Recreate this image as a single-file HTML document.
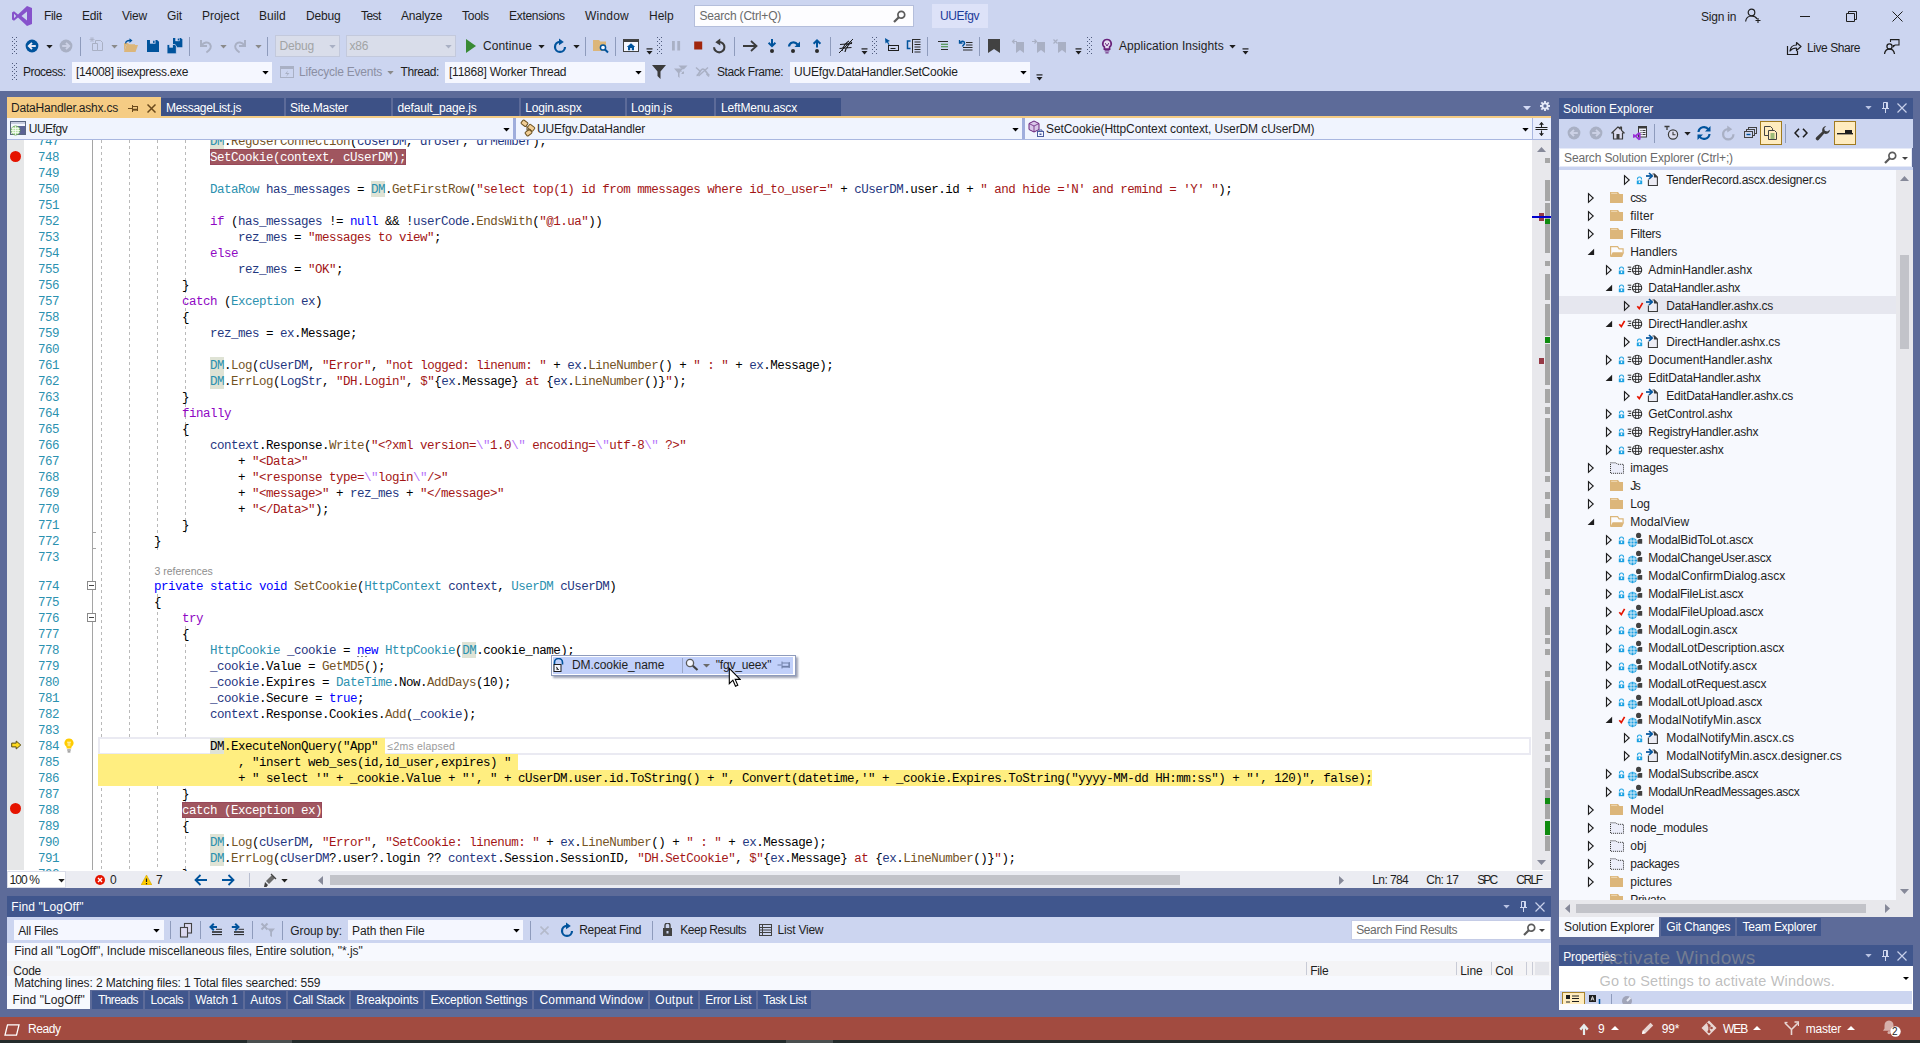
<!DOCTYPE html><html><head><meta charset="utf-8"><title>UUEfgv (Debugging) - Microsoft Visual Studio</title><style>
*{box-sizing:border-box;margin:0;padding:0}
html,body{width:1920px;height:1043px;overflow:hidden;background:#5D6B99;font-family:"Liberation Sans",sans-serif;font-size:12px;color:#000}
body{position:relative}
div,svg{position:absolute}
.t{white-space:pre;}
.code{font-family:"Liberation Mono",monospace;font-size:12.5px;letter-spacing:-0.5px;white-space:pre;height:16px;line-height:16px;color:#000}
.ln{font-family:"Liberation Mono",monospace;font-size:12.5px;letter-spacing:-0.5px;white-space:pre;height:16px;line-height:16px;color:#2B91AF}
.code span{position:static}
.k{color:#0000FF}.c{color:#8F08C4}.ty{color:#2B91AF}.s{color:#A31515}.m{color:#74531F}.v{color:#1F377F}.e{color:#B776FB}
.g{color:#2B91AF}
.bp{color:#fff}
.tab{height:19px;top:97px;background:#40568D;color:#fff;white-space:pre;line-height:19px;padding-left:5px}
.btab{height:19px;top:991px;background:#40568D;color:#fff;white-space:pre;line-height:18px;text-align:center}
.cb{background:#F5F7FF;border:1px solid #F5F7FF}
</style></head><body>
<div style="left:0px;top:0px;width:1920px;height:91px;background:#CCD5F0;"></div>
<svg style="left:11px;top:5px;" width="22" height="22" viewBox="0 0 22 22"><path d="M16 1l5 2v16l-5 2-9-8.500-4 3.200L1 14.500V7.500L3 6.300l4 3.200zM16 6.500L10.500 11l5.500 4.500zM3 8.800v4.400L5.200 11z" fill="#8652CB" fill-rule="evenodd"/></svg>
<div class="t" style="left:44px;top:8.0px;height:16px;line-height:16px;color:#1E1E1E;font-size:12px;letter-spacing:-0.336px;">File</div>
<div class="t" style="left:82px;top:8.0px;height:16px;line-height:16px;color:#1E1E1E;font-size:12px;letter-spacing:-0.172px;">Edit</div>
<div class="t" style="left:122px;top:8.0px;height:16px;line-height:16px;color:#1E1E1E;font-size:12px;letter-spacing:-0.199px;">View</div>
<div class="t" style="left:167px;top:8.0px;height:16px;line-height:16px;color:#1E1E1E;font-size:12px;letter-spacing:-0.115px;">Git</div>
<div class="t" style="left:202px;top:8.0px;height:16px;line-height:16px;color:#1E1E1E;font-size:12px;letter-spacing:-0.023px;">Project</div>
<div class="t" style="left:259px;top:8.0px;height:16px;line-height:16px;color:#1E1E1E;font-size:12px;letter-spacing:0.002px;">Build</div>
<div class="t" style="left:306px;top:8.0px;height:16px;line-height:16px;color:#1E1E1E;font-size:12px;letter-spacing:-0.175px;">Debug</div>
<div class="t" style="left:361px;top:8.0px;height:16px;line-height:16px;color:#1E1E1E;font-size:12px;letter-spacing:-0.554px;">Test</div>
<div class="t" style="left:401px;top:8.0px;height:16px;line-height:16px;color:#1E1E1E;font-size:12px;letter-spacing:-0.215px;">Analyze</div>
<div class="t" style="left:462px;top:8.0px;height:16px;line-height:16px;color:#1E1E1E;font-size:12px;letter-spacing:-0.243px;">Tools</div>
<div class="t" style="left:509px;top:8.0px;height:16px;line-height:16px;color:#1E1E1E;font-size:12px;letter-spacing:-0.300px;">Extensions</div>
<div class="t" style="left:585px;top:8.0px;height:16px;line-height:16px;color:#1E1E1E;font-size:12px;letter-spacing:0.219px;">Window</div>
<div class="t" style="left:649px;top:8.0px;height:16px;line-height:16px;color:#1E1E1E;font-size:12px;letter-spacing:0.003px;">Help</div>
<div style="left:694px;top:5px;width:220px;height:22px;background:#FDFDFF;border:1px solid #B4BEDB;"></div>
<div class="t" style="left:699.5px;top:8.0px;height:16px;line-height:16px;color:#6A6A6A;font-size:12px;letter-spacing:-0.184px;">Search (Ctrl+Q)</div>
<svg style="left:893px;top:10px;" width="13" height="13" viewBox="0 0 13 13"><circle cx="8.300" cy="4.700" r="3.400" fill="none" stroke="#5B5B5B" stroke-width="1.700"/><path d="M5.800 7.200L1 12" stroke="#5B5B5B" stroke-width="2.200"/></svg>
<div style="left:932px;top:4px;width:56px;height:24px;background:#DDE2F8;"></div>
<div class="t" style="left:940px;top:8.0px;height:16px;line-height:16px;color:#1B3A9A;font-size:12px;letter-spacing:-0.357px;">UUEfgv</div>
<div class="t" style="left:1701px;top:9.0px;height:16px;line-height:16px;color:#1E1E1E;font-size:12px;letter-spacing:-0.200px;">Sign in</div>
<svg style="left:1745px;top:8px;" width="16" height="16" viewBox="0 0 16 16"><circle cx="6.500" cy="4.500" r="3.300" fill="none" stroke="#1E1E1E" stroke-width="1.200"/><path d="M.600 13.500c.500-4 3-5.500 6-5.500s4.500 1.200 5.500 3" fill="none" stroke="#1E1E1E" stroke-width="1.200"/><path d="M13 10v5M10.500 12.500h5" stroke="#1E1E1E" stroke-width="1.100"/></svg>
<div style="left:1800px;top:16px;width:10px;height:1px;background:#1E1E1E"></div>
<svg style="left:1846px;top:11px;" width="11" height="11" viewBox="0 0 11 11"><path d="M.5 2.500h8v8h-8z" fill="none" stroke="#1E1E1E"/><path d="M2.500 2.500v-2h8v8h-2" fill="none" stroke="#1E1E1E"/></svg>
<svg style="left:1892px;top:11px;" width="11" height="11" viewBox="0 0 11 11"><path d="M.5 .5l10 10M10.5 .5l-10 10" stroke="#1E1E1E" stroke-width="1"/></svg>
<svg style="left:12px;top:37px;" width="5" height="18" viewBox="0 0 5 18"><rect x="0" y="0" width="1" height="1" fill="#4F5B7D"/><rect x="4" y="0" width="1" height="1" fill="#4F5B7D"/><rect x="2" y="2" width="1" height="1" fill="#4F5B7D"/><rect x="0" y="4" width="1" height="1" fill="#4F5B7D"/><rect x="4" y="4" width="1" height="1" fill="#4F5B7D"/><rect x="2" y="6" width="1" height="1" fill="#4F5B7D"/><rect x="0" y="8" width="1" height="1" fill="#4F5B7D"/><rect x="4" y="8" width="1" height="1" fill="#4F5B7D"/><rect x="2" y="10" width="1" height="1" fill="#4F5B7D"/><rect x="0" y="12" width="1" height="1" fill="#4F5B7D"/><rect x="4" y="12" width="1" height="1" fill="#4F5B7D"/><rect x="2" y="14" width="1" height="1" fill="#4F5B7D"/><rect x="0" y="16" width="1" height="1" fill="#4F5B7D"/><rect x="4" y="16" width="1" height="1" fill="#4F5B7D"/><rect x="2" y="18" width="1" height="1" fill="#4F5B7D"/></svg>
<svg style="left:25px;top:39px;" width="14" height="14" viewBox="0 0 14 14"><circle cx="7" cy="7" r="6.400" fill="#00539C"/><path d="M10.800 7H4.200" stroke="#F0EEF8" stroke-width="1.900"/><path d="M7 3.800L3.800 7 7 10.200" fill="none" stroke="#F0EEF8" stroke-width="1.900"/></svg>
<svg style="left:46px;top:45px;" width="7" height="4" viewBox="0 0 7 4"><path d="M.300 0h6.400L3.500 3.500z" fill="#1E1E1E"/></svg>
<svg style="left:59px;top:39px;" width="14" height="14" viewBox="0 0 14 14"><circle cx="7" cy="7" r="6.400" fill="#A9B0C4"/><g transform="translate(14,0) scale(-1,1)"><path d="M10.800 7H4.200" stroke="#CDD2E6" stroke-width="1.900"/><path d="M7 3.800L3.800 7 7 10.200" fill="none" stroke="#CDD2E6" stroke-width="1.900"/></g></svg>
<div style="left:80px;top:37px;width:1px;height:19px;background:#8E9BBC"></div>
<svg style="left:89px;top:37px;" width="16" height="16" viewBox="0 0 16 16"><path d="M6.5 3.5h5l2 2v8h-7z" fill="none" stroke="#A9B0C4"/><path d="M3.5 6.5h5v7h-5z" fill="#CCD5F0" stroke="#A9B0C4"/><path d="M3 0v5M.5 2.5h5M1.2 .8l3.6 3.6M4.8 .8L1.2 4.4" stroke="#A9B0C4" stroke-width=".8"/></svg>
<svg style="left:111px;top:45px;" width="7" height="4" viewBox="0 0 7 4"><path d="M.300 0h6.400L3.500 3.500z" fill="#8A8A8A"/></svg>
<svg style="left:123px;top:38px;" width="16" height="16" viewBox="0 0 16 16"><path d="M1 14l2.5-7H15l-2.5 7z" fill="#DCB67A"/><path d="M1 14V5h4l1 1.2h6V7H3.2z" fill="#DCB67A"/><path d="M2 5.5C2 3 4 1.8 6.5 1.8V.3L9.5 2.6 6.5 5V3.3C4.6 3.3 3.3 4 3.3 5.5z" fill="#00539C"/></svg>
<svg style="left:147px;top:40px;" width="12" height="12" viewBox="0 0 13 13"><path d="M0 0h11l2 2v11H0z" fill="#00539C"/><rect x="3.2" y="0" width="6" height="4" fill="#CCD5F0"/><rect x="6.6" y=".8" width="1.6" height="2.4" fill="#00539C"/></svg>
<svg style="left:167px;top:38px;" width="16" height="16" viewBox="0 0 16 16"><g transform="translate(6,0) scale(.72)"><path d="M0 0h11l2 2v11H0z" fill="#00539C"/><rect x="3.2" y="0" width="6" height="4.4" fill="#CCD5F0"/><rect x="6.6" y=".8" width="1.8" height="2.6" fill="#00539C"/></g><g transform="translate(0,6.5) scale(.72)"><path d="M0 0h11l2 2v11H0z" fill="#00539C" stroke="#CCD5F0" stroke-width="1.2"/><rect x="3.2" y="0" width="5" height="4.4" fill="#CCD5F0"/></g></svg>
<div style="left:189px;top:37px;width:1px;height:19px;background:#8E9BBC"></div>
<svg style="left:198px;top:38.5px;" width="15" height="15" viewBox="0 0 15 15"><path d="M3 1v6h6" fill="none" stroke="#A9B0C4" stroke-width="2"/><path d="M3.5 6.5C6 3 10 2.6 12 5.2c2 2.7.3 5.8-3.6 8.3" fill="none" stroke="#A9B0C4" stroke-width="2"/></svg>
<svg style="left:220px;top:45px;" width="7" height="4" viewBox="0 0 7 4"><path d="M.300 0h6.400L3.500 3.500z" fill="#8A8A8A"/></svg>
<svg style="left:233px;top:38.5px;" width="15" height="15" viewBox="0 0 15 15"><g transform="translate(15,0) scale(-1,1)"><path d="M3 1v6h6" fill="none" stroke="#A9B0C4" stroke-width="2"/><path d="M3.5 6.5C6 3 10 2.6 12 5.2c2 2.7.3 5.8-3.6 8.3" fill="none" stroke="#A9B0C4" stroke-width="2"/></g></svg>
<svg style="left:255px;top:45px;" width="7" height="4" viewBox="0 0 7 4"><path d="M.300 0h6.400L3.500 3.500z" fill="#8A8A8A"/></svg>
<div style="left:267px;top:37px;width:1px;height:19px;background:#8E9BBC"></div>
<div style="left:275px;top:35px;width:65px;height:22px;background:#D9DDEA;border:1px solid #C3C9DC;"></div>
<div class="t" style="left:279.5px;top:38.0px;height:16px;line-height:16px;color:#A2A4A5;font-size:12px;letter-spacing:-0.175px;">Debug</div>
<svg style="left:329px;top:45px;" width="7" height="4" viewBox="0 0 7 4"><path d="M.300 0h6.400L3.500 3.500z" fill="#A9B0C4"/></svg>
<div style="left:346px;top:35px;width:110px;height:22px;background:#D9DDEA;border:1px solid #C3C9DC;"></div>
<div class="t" style="left:349.5px;top:38.0px;height:16px;line-height:16px;color:#A2A4A5;font-size:12px;letter-spacing:-0.186px;">x86</div>
<svg style="left:445px;top:45px;" width="7" height="4" viewBox="0 0 7 4"><path d="M.300 0h6.400L3.500 3.500z" fill="#A9B0C4"/></svg>
<svg style="left:466px;top:39px;" width="10" height="14" viewBox="0 0 10 14"><path d="M0 0l10 7-10 7z" fill="#388A34"/></svg>
<div class="t" style="left:483px;top:38.0px;height:16px;line-height:16px;color:#1E1E1E;font-size:12px;letter-spacing:0.119px;">Continue</div>
<svg style="left:538px;top:45px;" width="7" height="4" viewBox="0 0 7 4"><path d="M.300 0h6.400L3.500 3.500z" fill="#1E1E1E"/></svg>
<svg style="left:552px;top:38px;" width="15" height="15" viewBox="-1 -1.500 15 15"><path d="M7 2.400A5 5 0 1 0 12 7.400" fill="none" stroke="#00539C" stroke-width="2.200"/><path d="M6 -1L10.800 2.500 6 5.800z" fill="#00539C"/></svg>
<svg style="left:573px;top:45px;" width="7" height="4" viewBox="0 0 7 4"><path d="M.300 0h6.400L3.500 3.500z" fill="#1E1E1E"/></svg>
<div style="left:585px;top:37px;width:1px;height:19px;background:#8E9BBC"></div>
<svg style="left:593px;top:38px;" width="16" height="16" viewBox="0 0 16 16"><path d="M0 2h6l1.3 1.5H13V13H0z" fill="#DCB67A"/><circle cx="10" cy="9.5" r="2.6" fill="#F5F7FF" stroke="#00539C" stroke-width="1.5"/><path d="M12 11.5l3 3" stroke="#00539C" stroke-width="2"/></svg>
<div style="left:615px;top:37px;width:1px;height:19px;background:#8E9BBC"></div>
<svg style="left:623px;top:38px;" width="16" height="16" viewBox="0 0 16 16"><rect x=".5" y="1.5" width="15" height="12" fill="#F5F7FF" stroke="#424242"/><rect x="1" y="2" width="14" height="2" fill="#424242"/><path d="M8 5.2L3.8 9H5v3.2h2.2V10h1.6v2.200H11V9h1.2z" fill="#00539C"/></svg>
<svg style="left:646px;top:48px;" width="7" height="7" viewBox="0 0 7 7"><rect x=".500" y=".300" width="6" height="1.200" fill="#1E1E1E"/><path d="M.500 3h6l-3 3.400z" fill="#1E1E1E"/></svg>
<svg style="left:657px;top:37px;" width="5" height="18" viewBox="0 0 5 18"><rect x="0" y="0" width="1" height="1" fill="#4F5B7D"/><rect x="4" y="0" width="1" height="1" fill="#4F5B7D"/><rect x="2" y="2" width="1" height="1" fill="#4F5B7D"/><rect x="0" y="4" width="1" height="1" fill="#4F5B7D"/><rect x="4" y="4" width="1" height="1" fill="#4F5B7D"/><rect x="2" y="6" width="1" height="1" fill="#4F5B7D"/><rect x="0" y="8" width="1" height="1" fill="#4F5B7D"/><rect x="4" y="8" width="1" height="1" fill="#4F5B7D"/><rect x="2" y="10" width="1" height="1" fill="#4F5B7D"/><rect x="0" y="12" width="1" height="1" fill="#4F5B7D"/><rect x="4" y="12" width="1" height="1" fill="#4F5B7D"/><rect x="2" y="14" width="1" height="1" fill="#4F5B7D"/><rect x="0" y="16" width="1" height="1" fill="#4F5B7D"/><rect x="4" y="16" width="1" height="1" fill="#4F5B7D"/><rect x="2" y="18" width="1" height="1" fill="#4F5B7D"/></svg>
<svg style="left:672px;top:41px;" width="9" height="10" viewBox="0 0 9 10"><rect x="0" y="0" width="2.800" height="9.500" fill="#A9B0C4"/><rect x="5.300" y="0" width="2.800" height="9.500" fill="#A9B0C4"/></svg>
<svg style="left:694px;top:41px;" width="9" height="9" viewBox="0 0 9 9"><rect x=".200" y=".500" width="8" height="8" fill="#A1260D"/></svg>
<svg style="left:712px;top:38px;" width="15.5" height="15.5" viewBox="-1 -1.500 15 15"><g transform="translate(13,0) scale(-1,1)"><path d="M7 2.400A5 5 0 1 0 12 7.400" fill="none" stroke="#3B3B3B" stroke-width="2"/><path d="M6 -1L10.800 2.500 6 5.800z" fill="#3B3B3B"/></g></svg>
<div style="left:734px;top:37px;width:1px;height:19px;background:#8E9BBC"></div>
<svg style="left:743px;top:40px;" width="15" height="12" viewBox="0 0 15 12"><path d="M0 6h13M8 1l5.500 5L8 11" fill="none" stroke="#3B3B3B" stroke-width="1.8"/></svg>
<svg style="left:766px;top:38px;" width="12" height="16" viewBox="0 0 12 16"><path d="M6 1v6.500" stroke="#00539C" stroke-width="2"/><path d="M2.600 4.800L6 8.200l3.400-3.400" fill="none" stroke="#00539C" stroke-width="2"/><circle cx="6" cy="13" r="2" fill="#2B2B2B"/></svg>
<svg style="left:787px;top:38px;" width="14" height="16" viewBox="0 0 14 16"><path d="M2 8.500C2.500 4 8 3 10.500 6.500" fill="none" stroke="#00539C" stroke-width="2.200"/><path d="M13 3.500v5.500H7.500z" fill="#00539C"/><circle cx="6" cy="13" r="2" fill="#2B2B2B"/></svg>
<svg style="left:811px;top:38px;" width="12" height="16" viewBox="0 0 12 16"><path d="M6 9.500V3" stroke="#00539C" stroke-width="2"/><path d="M2.600 5.800L6 2.400l3.400 3.400" fill="none" stroke="#00539C" stroke-width="2"/><circle cx="6" cy="13" r="2" fill="#2B2B2B"/></svg>
<div style="left:830px;top:37px;width:1px;height:19px;background:#8E9BBC"></div>
<svg style="left:838px;top:38px;" width="16" height="16" viewBox="0 0 16 16"><path d="M4 13C5 8 9 4 11 3M7 14c1-5 5-9 7-10M2 6.500l12-1M1.500 10.500l12-1" fill="none" stroke="#1E1E1E" stroke-width="1.2"/><path d="M1 15L15 1" stroke="#1E1E1E" stroke-width="1"/></svg>
<svg style="left:861px;top:48px;" width="7" height="7" viewBox="0 0 7 7"><rect x=".500" y=".300" width="6" height="1.200" fill="#1E1E1E"/><path d="M.500 3h6l-3 3.400z" fill="#1E1E1E"/></svg>
<svg style="left:872px;top:37px;" width="5" height="18" viewBox="0 0 5 18"><rect x="0" y="0" width="1" height="1" fill="#4F5B7D"/><rect x="4" y="0" width="1" height="1" fill="#4F5B7D"/><rect x="2" y="2" width="1" height="1" fill="#4F5B7D"/><rect x="0" y="4" width="1" height="1" fill="#4F5B7D"/><rect x="4" y="4" width="1" height="1" fill="#4F5B7D"/><rect x="2" y="6" width="1" height="1" fill="#4F5B7D"/><rect x="0" y="8" width="1" height="1" fill="#4F5B7D"/><rect x="4" y="8" width="1" height="1" fill="#4F5B7D"/><rect x="2" y="10" width="1" height="1" fill="#4F5B7D"/><rect x="0" y="12" width="1" height="1" fill="#4F5B7D"/><rect x="4" y="12" width="1" height="1" fill="#4F5B7D"/><rect x="2" y="14" width="1" height="1" fill="#4F5B7D"/><rect x="0" y="16" width="1" height="1" fill="#4F5B7D"/><rect x="4" y="16" width="1" height="1" fill="#4F5B7D"/><rect x="2" y="18" width="1" height="1" fill="#4F5B7D"/></svg>
<svg style="left:885px;top:38px;" width="15" height="15" viewBox="0 0 15 15"><path d="M0 0l5 3-2 .8 1.500 2.700-1 .5L2 4.300.500 5.500z" fill="#00539C"/><rect x="3.500" y="7.500" width="10" height="5" fill="none" stroke="#1E1E1E"/><path d="M5.500 10.500h5" stroke="#1E1E1E"/></svg>
<svg style="left:906px;top:38px;" width="16" height="16" viewBox="0 0 16 16"><path d="M4.500 3H1.500v7.500h3" stroke="#00539C" stroke-width="1.500" fill="none"/><path d="M6 1.500h8.500M8.500 4h6M8.500 6.500h6M8.500 9h6M8.500 11.500h6M8.500 14h6" stroke="#2B2B2B" stroke-width="1"/><path d="M6.500 1v14" stroke="#2B2B2B"/></svg>
<div style="left:927px;top:37px;width:1px;height:19px;background:#8E9BBC"></div>
<svg style="left:937px;top:40px;" width="13" height="12" viewBox="0 0 13 12"><path d="M1 1.500h10M4 9.500h7" stroke="#2B2B2B" stroke-width="1"/><path d="M4 4.200h7M4 6.800h7" stroke="#388A34" stroke-width="1.100"/></svg>
<svg style="left:958px;top:39px;" width="15" height="13" viewBox="0 0 15 13"><path d="M8 3.500h6.500M8 6h6.500M5 8.500h9.500M5 11h9.500" stroke="#2B2B2B" stroke-width="1"/><path d="M1.500 1v3h3" fill="none" stroke="#00539C" stroke-width="1.300"/><path d="M2 3.800C3.500 1.500 6.500 2 6.500 4.200 6.500 5.800 5 6 4.500 7.500" fill="none" stroke="#00539C" stroke-width="1.500"/></svg>
<div style="left:979px;top:37px;width:1px;height:19px;background:#8E9BBC"></div>
<svg style="left:988px;top:39px;" width="12" height="14" viewBox="0 0 12 14"><path d="M0 0h12v14L6 10 0 14z" fill="#424242"/></svg>
<svg style="left:1011px;top:39px;" width="14" height="14" viewBox="0 0 14 14"><path d="M5 3h8v11l-4-3-4 3z" fill="#A9B0C4"/><path d="M6 2.500H1.500M3.500 .500l-2 2 2 2" fill="none" stroke="#A9B0C4" stroke-width="1.200"/></svg>
<svg style="left:1032px;top:39px;" width="14" height="14" viewBox="0 0 14 14"><path d="M5 3h8v11l-4-3-4 3z" fill="#A9B0C4"/><path d="M0 2.500h4.500M2.500 .500l2 2-2 2" fill="none" stroke="#A9B0C4" stroke-width="1.200"/></svg>
<svg style="left:1053px;top:39px;" width="14" height="14" viewBox="0 0 14 14"><path d="M5 3h8v11l-4-3-4 3z" fill="#A9B0C4"/><path d="M.500 .500l4 4M4.500 .500l-4 4" fill="none" stroke="#A9B0C4" stroke-width="1.200"/></svg>
<svg style="left:1075px;top:48px;" width="7" height="7" viewBox="0 0 7 7"><rect x=".500" y=".300" width="6" height="1.200" fill="#1E1E1E"/><path d="M.500 3h6l-3 3.400z" fill="#1E1E1E"/></svg>
<svg style="left:1087px;top:37px;" width="5" height="18" viewBox="0 0 5 18"><rect x="0" y="0" width="1" height="1" fill="#4F5B7D"/><rect x="4" y="0" width="1" height="1" fill="#4F5B7D"/><rect x="2" y="2" width="1" height="1" fill="#4F5B7D"/><rect x="0" y="4" width="1" height="1" fill="#4F5B7D"/><rect x="4" y="4" width="1" height="1" fill="#4F5B7D"/><rect x="2" y="6" width="1" height="1" fill="#4F5B7D"/><rect x="0" y="8" width="1" height="1" fill="#4F5B7D"/><rect x="4" y="8" width="1" height="1" fill="#4F5B7D"/><rect x="2" y="10" width="1" height="1" fill="#4F5B7D"/><rect x="0" y="12" width="1" height="1" fill="#4F5B7D"/><rect x="4" y="12" width="1" height="1" fill="#4F5B7D"/><rect x="2" y="14" width="1" height="1" fill="#4F5B7D"/><rect x="0" y="16" width="1" height="1" fill="#4F5B7D"/><rect x="4" y="16" width="1" height="1" fill="#4F5B7D"/><rect x="2" y="18" width="1" height="1" fill="#4F5B7D"/></svg>
<svg style="left:1101px;top:38px;" width="12" height="16" viewBox="0 0 12 16"><path d="M6 1.500a4.200 4.200 0 0 0-2.600 7.500v2.200h5.200V9A4.200 4.200 0 0 0 6 1.500z" fill="#E6DDF0" stroke="#68217A" stroke-width="1.700"/><path d="M4.300 5.200L6 8l1.700-2.800" fill="none" stroke="#68217A" stroke-width="1"/><rect x="3.600" y="12.300" width="4.800" height="1.100" fill="#68217A"/><rect x="4.400" y="14.300" width="3.200" height="1.100" fill="#68217A"/></svg>
<div class="t" style="left:1119px;top:38.0px;height:16px;line-height:16px;color:#1E1E1E;font-size:12px;letter-spacing:0.070px;">Application Insights</div>
<svg style="left:1229px;top:45px;" width="7" height="4" viewBox="0 0 7 4"><path d="M.300 0h6.400L3.500 3.500z" fill="#1E1E1E"/></svg>
<svg style="left:1242px;top:48px;" width="7" height="7" viewBox="0 0 7 7"><rect x=".500" y=".300" width="6" height="1.200" fill="#1E1E1E"/><path d="M.500 3h6l-3 3.400z" fill="#1E1E1E"/></svg>
<svg style="left:1786px;top:40px;" width="16" height="16" viewBox="0 0 16 16"><path d="M1.500 6v8.500h10V11" fill="none" stroke="#1E1E1E" stroke-width="1.200"/><path d="M4 11c.5-4 3-6 6.500-6V2.500l4.500 4-4.500 4V8C8 8 5.500 9 4 11z" fill="none" stroke="#1E1E1E" stroke-width="1.200" stroke-linejoin="round"/></svg>
<div class="t" style="left:1807px;top:40.0px;height:16px;line-height:16px;color:#1E1E1E;font-size:12px;letter-spacing:-0.438px;">Live Share</div>
<svg style="left:1884px;top:39px;" width="16" height="16" viewBox="0 0 16 16"><circle cx="5.500" cy="7.500" r="2.600" fill="none" stroke="#1E1E1E" stroke-width="1.300"/><path d="M.500 15c.500-3.500 2.500-5 5-5s4.500 1.500 5 5" fill="none" stroke="#1E1E1E" stroke-width="1.300"/><path d="M6.500 3V.600h8.500V6H11l-1.500 1.500V6" fill="none" stroke="#1E1E1E" stroke-width="1.100"/></svg>
<svg style="left:12px;top:63px;" width="5" height="18" viewBox="0 0 5 18"><rect x="0" y="0" width="1" height="1" fill="#4F5B7D"/><rect x="4" y="0" width="1" height="1" fill="#4F5B7D"/><rect x="2" y="2" width="1" height="1" fill="#4F5B7D"/><rect x="0" y="4" width="1" height="1" fill="#4F5B7D"/><rect x="4" y="4" width="1" height="1" fill="#4F5B7D"/><rect x="2" y="6" width="1" height="1" fill="#4F5B7D"/><rect x="0" y="8" width="1" height="1" fill="#4F5B7D"/><rect x="4" y="8" width="1" height="1" fill="#4F5B7D"/><rect x="2" y="10" width="1" height="1" fill="#4F5B7D"/><rect x="0" y="12" width="1" height="1" fill="#4F5B7D"/><rect x="4" y="12" width="1" height="1" fill="#4F5B7D"/><rect x="2" y="14" width="1" height="1" fill="#4F5B7D"/><rect x="0" y="16" width="1" height="1" fill="#4F5B7D"/><rect x="4" y="16" width="1" height="1" fill="#4F5B7D"/><rect x="2" y="18" width="1" height="1" fill="#4F5B7D"/></svg>
<div class="t" style="left:23px;top:64.0px;height:16px;line-height:16px;color:#1E1E1E;font-size:12px;letter-spacing:-0.523px;">Process:</div>
<div style="left:72px;top:62px;width:200px;height:21px;background:#F5F7FF;"></div>
<div class="t" style="left:76px;top:64.0px;height:16px;line-height:16px;color:#1E1E1E;font-size:12px;letter-spacing:-0.337px;">[14008] iisexpress.exe</div>
<svg style="left:262px;top:71px;" width="7" height="4" viewBox="0 0 7 4"><path d="M.300 0h6.400L3.500 3.500z" fill="#000"/></svg>
<svg style="left:280px;top:66px;" width="14" height="13" viewBox="0 0 14 13"><rect x=".500" y=".500" width="13" height="11" fill="none" stroke="#A9B0C4"/><rect x=".500" y=".500" width="13" height="2.500" fill="#A9B0C4"/><path d="M8 4.500L5 8h2.500L6 11l3.500-4H7z" fill="#A9B0C4"/></svg>
<div class="t" style="left:299px;top:64.0px;height:16px;line-height:16px;color:#8B8FA3;font-size:12px;letter-spacing:-0.232px;">Lifecycle Events</div>
<svg style="left:387px;top:71px;" width="7" height="4" viewBox="0 0 7 4"><path d="M.300 0h6.400L3.500 3.500z" fill="#8A8A8A"/></svg>
<div class="t" style="left:400.5px;top:64.0px;height:16px;line-height:16px;color:#1E1E1E;font-size:12px;letter-spacing:-0.437px;">Thread:</div>
<div style="left:445px;top:62px;width:200px;height:21px;background:#F5F7FF;"></div>
<div class="t" style="left:449px;top:64.0px;height:16px;line-height:16px;color:#1E1E1E;font-size:12px;letter-spacing:-0.228px;">[11868] Worker Thread</div>
<svg style="left:635px;top:71px;" width="7" height="4" viewBox="0 0 7 4"><path d="M.300 0h6.400L3.500 3.500z" fill="#000"/></svg>
<svg style="left:652px;top:65px;" width="14" height="14" viewBox="0 0 14 14"><path d="M0 0h14L8.500 6.500V14L5.500 11V6.500z" fill="#3B3B3B"/></svg>
<svg style="left:673px;top:65px;" width="15" height="14" viewBox="0 0 15 14"><path d="M5.500 .500h9L11 4.200H9z" fill="#A9B0C4"/><path d="M1 3.500h9L6.500 8v5L5 11.500V8z" fill="#A9B0C4"/><path d="M8.500 6.500l2 1.800M10.500 6.500v2h-2" stroke="#A9B0C4" stroke-width="1" fill="none"/></svg>
<svg style="left:695px;top:66px;" width="16" height="12" viewBox="0 0 16 12"><path d="M1.500 9.500C4 9.500 5 3 8 3s3.500 6 6.500 6" fill="none" stroke="#A9B0C4" stroke-width="1.700"/><path d="M1 1.500l4.500 4M3.500 10L13 1.500M11.500 8l2.500 2.500" stroke="#A9B0C4" stroke-width="1.400"/></svg>
<div class="t" style="left:717px;top:64.0px;height:16px;line-height:16px;color:#1E1E1E;font-size:12px;letter-spacing:-0.422px;">Stack Frame:</div>
<div style="left:790px;top:62px;width:240px;height:21px;background:#F5F7FF;"></div>
<div class="t" style="left:794px;top:64.0px;height:16px;line-height:16px;color:#1E1E1E;font-size:12px;letter-spacing:-0.193px;">UUEfgv.DataHandler.SetCookie</div>
<svg style="left:1020px;top:71px;" width="7" height="4" viewBox="0 0 7 4"><path d="M.300 0h6.400L3.500 3.500z" fill="#000"/></svg>
<svg style="left:1036px;top:74px;" width="7" height="7" viewBox="0 0 7 7"><rect x=".500" y=".300" width="6" height="1.200" fill="#1E1E1E"/><path d="M.500 3h6l-3 3.400z" fill="#1E1E1E"/></svg>
<div style="left:7px;top:97px;width:154px;height:21px;background:#F5CC84;"></div>
<div class="t" style="left:11px;top:100.0px;height:16px;line-height:16px;color:#1E1E1E;font-size:12px;letter-spacing:-0.197px;">DataHandler.ashx.cs</div>
<svg style="left:127.5px;top:104px;" width="10" height="9" viewBox="0 0 10 9"><path d="M0 4.500h4M4.500 1v7M4.500 2.500h5v3.500h-5M9.500 2v5" fill="none" stroke="#6B4A1C" stroke-width="1"/><path d="M4.500 5.500h5" stroke="#6B4A1C" stroke-width="1.500"/></svg>
<svg style="left:146.5px;top:103.8px;" width="9" height="9" viewBox="0 0 9 9"><path d="M.5 .5l8 8M8.5 .5l-8 8" stroke="#6B4A1C" stroke-width="1.5"/></svg>
<div style="left:161px;top:98px;width:123px;height:18px;background:#3D5186;"></div>
<div class="t" style="left:166px;top:99.5px;height:16px;line-height:16px;color:#fff;font-size:12px;letter-spacing:-0.298px;">MessageList.js</div>
<div style="left:286px;top:98px;width:105px;height:18px;background:#3D5186;"></div>
<div class="t" style="left:290px;top:99.5px;height:16px;line-height:16px;color:#fff;font-size:12px;letter-spacing:-0.244px;">Site.Master</div>
<div style="left:393px;top:98px;width:126px;height:18px;background:#3D5186;"></div>
<div class="t" style="left:397.5px;top:99.5px;height:16px;line-height:16px;color:#fff;font-size:12px;letter-spacing:-0.160px;">default_page.js</div>
<div style="left:521px;top:98px;width:104px;height:18px;background:#3D5186;"></div>
<div class="t" style="left:525.3px;top:99.5px;height:16px;line-height:16px;color:#fff;font-size:12px;letter-spacing:-0.185px;">Login.aspx</div>
<div style="left:627px;top:98px;width:87px;height:18px;background:#3D5186;"></div>
<div class="t" style="left:631px;top:99.5px;height:16px;line-height:16px;color:#fff;font-size:12px;letter-spacing:-0.022px;">Login.js</div>
<div style="left:716px;top:98px;width:125px;height:18px;background:#3D5186;"></div>
<div class="t" style="left:721px;top:99.5px;height:16px;line-height:16px;color:#fff;font-size:12px;letter-spacing:-0.157px;">LeftMenu.ascx</div>
<div style="left:7px;top:116px;width:1544px;height:2px;background:#F5CC84;"></div>
<svg style="left:1523px;top:105.7px;" width="8" height="5" viewBox="0 0 8 5"><path d="M0 0h8L4 4.300z" fill="#D3DAF4"/></svg>
<svg style="left:1540px;top:101px;" width="10" height="10" viewBox="0 0 10 10"><rect x="4.050" y="-.200" width="1.900" height="10.400" fill="#E4E9F8" transform="rotate(0 5 5)"/><rect x="4.050" y="-.200" width="1.900" height="10.400" fill="#E4E9F8" transform="rotate(45 5 5)"/><rect x="4.050" y="-.200" width="1.900" height="10.400" fill="#E4E9F8" transform="rotate(90 5 5)"/><rect x="4.050" y="-.200" width="1.900" height="10.400" fill="#E4E9F8" transform="rotate(135 5 5)"/><circle cx="5" cy="5" r="3.500" fill="#E4E9F8"/><circle cx="5" cy="5" r="1.700" fill="#5D6B99"/></svg>
<div style="left:7px;top:118px;width:1544px;height:22px;background:#F0F4FE;border-bottom:1px solid #A9B7E0;"></div>
<svg style="left:10px;top:121px;" width="16" height="15" viewBox="0 0 16 15"><rect x=".500" y=".500" width="15" height="13" fill="#F5F7FF" stroke="#5B6781"/><rect x="1" y="1" width="14" height="2" fill="#C8CDE0"/><rect x="6" y="5" width="9" height="8" fill="#5B6394"/><circle cx="5.500" cy="9.500" r="4.500" fill="#B5E0A5" stroke="#5D9A4E" stroke-width=".8"/><path d="M1 9.500h9M5.500 5v9M3 6v7M8 6v7M1.500 7.500h8M1.500 11.500h8" stroke="#fff" stroke-width=".7" fill="none"/></svg>
<div class="t" style="left:28.7px;top:121.0px;height:16px;line-height:16px;color:#1E1E1E;font-size:12px;letter-spacing:-0.474px;">UUEfgv</div>
<svg style="left:503px;top:128px;" width="7" height="4" viewBox="0 0 7 4"><path d="M.300 0h6.400L3.500 3.500z" fill="#000"/></svg>
<div style="left:513px;top:118px;width:3px;height:21px;background:#9FADDC;"></div>
<svg style="left:519px;top:119px;" width="17" height="18" viewBox="0 0 17 18"><g fill="#F2CE95" stroke="#6E5423" stroke-width="1"><rect x="2.500" y="2" width="6" height="4.500" rx="1" transform="rotate(38 5.500 4.200)"/><rect x="9" y="6.500" width="6.500" height="4.500" rx="1" transform="rotate(38 12.200 8.700)"/><rect x="6.500" y="11.500" width="6" height="4.500" rx="1" transform="rotate(-38 9.500 13.700)"/></g><path d="M8 7v4h4" fill="none" stroke="#6E5423" stroke-width="1.100"/></svg>
<div class="t" style="left:537px;top:121.0px;height:16px;line-height:16px;color:#1E1E1E;font-size:12px;letter-spacing:-0.176px;">UUEfgv.DataHandler</div>
<svg style="left:1012px;top:128px;" width="7" height="4" viewBox="0 0 7 4"><path d="M.300 0h6.400L3.500 3.500z" fill="#000"/></svg>
<div style="left:1022px;top:118px;width:3px;height:21px;background:#9FADDC;"></div>
<svg style="left:1028px;top:120px;" width="17" height="18" viewBox="0 0 17 18"><path d="M6 1l5 2.500v6L6 12 1 9.500v-6z" fill="#D9C7E8" stroke="#68217A" stroke-width="1"/><path d="M1 3.500l5 2.500 5-2.500M6 6v6" fill="none" stroke="#68217A" stroke-width=".8"/><rect x="9.500" y="11.500" width="6" height="5" fill="#F5F7FF" stroke="#4A5C9E"/><rect x="11.500" y="13.500" width="2" height="1.500" fill="#4A5C9E"/><path d="M11 11.500v-1.500h3v1.500" fill="none" stroke="#4A5C9E"/></svg>
<div class="t" style="left:1046px;top:121.0px;height:16px;line-height:16px;color:#1E1E1E;font-size:12px;letter-spacing:-0.092px;">SetCookie(HttpContext context, UserDM cUserDM)</div>
<svg style="left:1522px;top:128px;" width="7" height="4" viewBox="0 0 7 4"><path d="M.300 0h6.400L3.500 3.500z" fill="#000"/></svg>
<div style="left:1532px;top:118px;width:1px;height:22px;background:#A9B7E0;"></div>
<div style="left:1533px;top:118px;width:18px;height:21px;background:#E8EDFD;"></div>
<svg style="left:1535px;top:121px;" width="13" height="16" viewBox="0 0 13 16"><path d="M.500 6.500h12M.500 8.500h12" stroke="#1E1E1E" stroke-width="1"/><path d="M6.500 1.500v5M6.500 9.500v5" stroke="#1E1E1E" stroke-width="1.100"/><path d="M4 3.800L6.500 1 9 3.800zM4 12.200L6.500 15 9 12.200z" fill="#1E1E1E"/></svg>
<div style="left:7px;top:140px;width:1544px;height:731px;overflow:hidden;background:#fff;"><div style="left:0px;top:0px;width:17px;height:730px;background:#E6E7E8;"></div><div style="left:85px;top:0px;width:1px;height:730px;background:#A5A5A5;"></div><div style="left:94px;top:0px;width:1px;height:730px;background:repeating-linear-gradient(to bottom,#B9B9B9 0 3px,transparent 3px 6px)"></div><div style="left:122px;top:0px;width:1px;height:730px;background:repeating-linear-gradient(to bottom,#B9B9B9 0 3px,transparent 3px 6px)"></div><div style="left:150px;top:0px;width:1px;height:410px;background:repeating-linear-gradient(to bottom,#B9B9B9 0 3px,transparent 3px 6px)"></div><div style="left:178px;top:0px;width:1px;height:394px;background:repeating-linear-gradient(to bottom,#B9B9B9 0 3px,transparent 3px 6px)"></div><div style="left:150px;top:454px;width:1px;height:276px;background:repeating-linear-gradient(to bottom,#B9B9B9 0 3px,transparent 3px 6px)"></div><div style="left:178px;top:486px;width:1px;height:244px;background:repeating-linear-gradient(to bottom,#B9B9B9 0 3px,transparent 3px 6px)"></div><div style="left:91px;top:597px;width:1433px;height:18px;background:#FFFFFF;border:2px solid #EAEAF2;"></div><div style="left:203px;top:598px;width:175px;height:16px;background:#FFEE80;"></div><div style="left:91px;top:614px;width:420px;height:16px;background:#FFEE80;"></div><div style="left:91px;top:630px;width:1274px;height:16px;background:#FFEE80;"></div><div class="ln" style="left:31px;top:-6px">747</div><div style="left:203px;top:-7px;width:14px;height:16px;background:#DFE3D5;"></div><div class="code" style="left:203px;top:-6px"><span class="g">DM</span>.<span class="m">RegUserConnection</span>(<span class="v">cUserDM</span>, <span class="v">drUser</span>, <span class="v">drMember</span>);</div><div class="ln" style="left:31px;top:10px">748</div><div style="left:203px;top:9px;width:196px;height:16px;background:#A0565F;border:1px solid #97485A;"></div><div class="code" style="left:203px;top:10px"><span class="bp">SetCookie(context, cUserDM);</span></div><div class="ln" style="left:31px;top:26px">749</div><div class="ln" style="left:31px;top:42px">750</div><div style="left:364px;top:41px;width:14px;height:16px;background:#DFE3D5;"></div><div class="code" style="left:203px;top:42px"><span class="ty">DataRow</span> <span class="v">has_messages</span> = <span class="g">DM</span>.<span class="m">GetFirstRow</span>(<span class="s">"select top(1) id from mmessages where id_to_user="</span> + <span class="v">cUserDM</span>.user.id + <span class="s">" and hide ='N' and remind = 'Y' "</span>);</div><div class="ln" style="left:31px;top:58px">751</div><div class="ln" style="left:31px;top:74px">752</div><div class="code" style="left:203px;top:74px"><span class="c">if</span> (<span class="v">has_messages</span> != <span class="k">null</span> &amp;&amp; !<span class="v">userCode</span>.<span class="m">EndsWith</span>(<span class="s">"@1.ua"</span>))</div><div class="ln" style="left:31px;top:90px">753</div><div class="code" style="left:231px;top:90px"><span class="v">rez_mes</span> = <span class="s">"messages to view"</span>;</div><div class="ln" style="left:31px;top:106px">754</div><div class="code" style="left:203px;top:106px"><span class="c">else</span></div><div class="ln" style="left:31px;top:122px">755</div><div class="code" style="left:231px;top:122px"><span class="v">rez_mes</span> = <span class="s">"OK"</span>;</div><div class="ln" style="left:31px;top:138px">756</div><div class="code" style="left:175px;top:138px">}</div><div class="ln" style="left:31px;top:154px">757</div><div class="code" style="left:175px;top:154px"><span class="c">catch</span> (<span class="ty">Exception</span> <span class="v">ex</span>)</div><div class="ln" style="left:31px;top:170px">758</div><div class="code" style="left:175px;top:170px">{</div><div class="ln" style="left:31px;top:186px">759</div><div class="code" style="left:203px;top:186px"><span class="v">rez_mes</span> = <span class="v">ex</span>.Message;</div><div class="ln" style="left:31px;top:202px">760</div><div class="ln" style="left:31px;top:218px">761</div><div style="left:203px;top:217px;width:14px;height:16px;background:#DFE3D5;"></div><div class="code" style="left:203px;top:218px"><span class="g">DM</span>.<span class="m">Log</span>(<span class="v">cUserDM</span>, <span class="s">"Error"</span>, <span class="s">"not logged: linenum: "</span> + <span class="v">ex</span>.<span class="m">LineNumber</span>() + <span class="s">" : "</span> + <span class="v">ex</span>.Message);</div><div class="ln" style="left:31px;top:234px">762</div><div style="left:203px;top:233px;width:14px;height:16px;background:#DFE3D5;"></div><div class="code" style="left:203px;top:234px"><span class="g">DM</span>.<span class="m">ErrLog</span>(<span class="v">LogStr</span>, <span class="s">"DH.Login"</span>, <span class="s">$"</span>{<span class="v">ex</span>.Message}<span class="s"> at </span>{<span class="v">ex</span>.<span class="m">LineNumber</span>()}<span class="s">"</span>);</div><div class="ln" style="left:31px;top:250px">763</div><div class="code" style="left:175px;top:250px">}</div><div class="ln" style="left:31px;top:266px">764</div><div class="code" style="left:175px;top:266px"><span class="c">finally</span></div><div class="ln" style="left:31px;top:282px">765</div><div class="code" style="left:175px;top:282px">{</div><div class="ln" style="left:31px;top:298px">766</div><div class="code" style="left:203px;top:298px"><span class="v">context</span>.Response.<span class="m">Write</span>(<span class="s">"&lt;?xml version=</span><span class="e">\"</span><span class="s">1.0</span><span class="e">\"</span><span class="s"> encoding=</span><span class="e">\"</span><span class="s">utf-8</span><span class="e">\"</span><span class="s"> ?&gt;"</span></div><div class="ln" style="left:31px;top:314px">767</div><div class="code" style="left:231px;top:314px">+ <span class="s">"&lt;Data&gt;"</span></div><div class="ln" style="left:31px;top:330px">768</div><div class="code" style="left:231px;top:330px">+ <span class="s">"&lt;response type=</span><span class="e">\"</span><span class="s">login</span><span class="e">\"</span><span class="s">/&gt;"</span></div><div class="ln" style="left:31px;top:346px">769</div><div class="code" style="left:231px;top:346px">+ <span class="s">"&lt;message&gt;"</span> + <span class="v">rez_mes</span> + <span class="s">"&lt;/message&gt;"</span></div><div class="ln" style="left:31px;top:362px">770</div><div class="code" style="left:231px;top:362px">+ <span class="s">"&lt;/Data&gt;"</span>);</div><div class="ln" style="left:31px;top:378px">771</div><div class="code" style="left:175px;top:378px">}</div><div class="ln" style="left:31px;top:394px">772</div><div class="code" style="left:147px;top:394px">}</div><div class="ln" style="left:31px;top:410px">773</div><div class="t" style="left:147.4px;top:425.0px;height:13px;line-height:13px;color:#8E8E8E;font-size:10.5px;letter-spacing:0.010px;">3 references</div><div class="ln" style="left:31px;top:439px">774</div><div class="code" style="left:147px;top:439px"><span class="k">private</span> <span class="k">static</span> <span class="k">void</span> <span class="m">SetCookie</span>(<span class="ty">HttpContext</span> <span class="v">context</span>, <span class="ty">UserDM</span> <span class="v">cUserDM</span>)</div><div class="ln" style="left:31px;top:455px">775</div><div class="code" style="left:147px;top:455px">{</div><div class="ln" style="left:31px;top:471px">776</div><div class="code" style="left:175px;top:471px"><span class="c">try</span></div><div class="ln" style="left:31px;top:487px">777</div><div class="code" style="left:175px;top:487px">{</div><div class="ln" style="left:31px;top:503px">778</div><div style="left:455px;top:502px;width:14px;height:16px;background:#DFE3D5;"></div><div class="code" style="left:203px;top:503px"><span class="ty">HttpCookie</span> <span class="v">_cookie</span> = <span class="k">new</span> <span class="ty">HttpCookie</span>(<span class="g">DM</span>.cookie_name);</div><div class="ln" style="left:31px;top:519px">779</div><div class="code" style="left:203px;top:519px"><span class="v">_cookie</span>.Value = <span class="m">GetMD5</span>();</div><div class="ln" style="left:31px;top:535px">780</div><div class="code" style="left:203px;top:535px"><span class="v">_cookie</span>.Expires = <span class="ty">DateTime</span>.Now.<span class="m">AddDays</span>(10);</div><div class="ln" style="left:31px;top:551px">781</div><div class="code" style="left:203px;top:551px"><span class="v">_cookie</span>.Secure = <span class="k">true</span>;</div><div class="ln" style="left:31px;top:567px">782</div><div class="code" style="left:203px;top:567px"><span class="v">context</span>.Response.Cookies.<span class="m">Add</span>(<span class="v">_cookie</span>);</div><div class="ln" style="left:31px;top:583px">783</div><div class="ln" style="left:31px;top:599px">784</div><div style="left:203px;top:598px;width:14px;height:16px;background:#DFE3D5;"></div><div class="code" style="left:203px;top:599px"><span class="g2">DM</span>.ExecuteNonQuery("App" </div><div class="ln" style="left:31px;top:615px">785</div><div class="code" style="left:231px;top:615px">, "insert web_ses(id,id_user,expires) " </div><div class="ln" style="left:31px;top:631px">786</div><div class="code" style="left:231px;top:631px">+ " select '" + _cookie.Value + "', " + cUserDM.user.id.ToString() + ", Convert(datetime,'" + _cookie.Expires.ToString("yyyy-MM-dd HH:mm:ss") + "', 120)", false);</div><div class="ln" style="left:31px;top:647px">787</div><div class="code" style="left:175px;top:647px">}</div><div class="ln" style="left:31px;top:663px">788</div><div style="left:175px;top:662px;width:140px;height:16px;background:#A0565F;border:1px solid #97485A;"></div><div class="code" style="left:175px;top:663px"><span class="bp">catch (Exception ex)</span></div><div class="ln" style="left:31px;top:679px">789</div><div class="code" style="left:175px;top:679px">{</div><div class="ln" style="left:31px;top:695px">790</div><div style="left:203px;top:694px;width:14px;height:16px;background:#DFE3D5;"></div><div class="code" style="left:203px;top:695px"><span class="g">DM</span>.<span class="m">Log</span>(<span class="v">cUserDM</span>, <span class="s">"Error"</span>, <span class="s">"SetCookie: linenum: "</span> + <span class="v">ex</span>.<span class="m">LineNumber</span>() + <span class="s">" : "</span> + <span class="v">ex</span>.Message);</div><div class="ln" style="left:31px;top:711px">791</div><div style="left:203px;top:710px;width:14px;height:16px;background:#DFE3D5;"></div><div class="code" style="left:203px;top:711px"><span class="g">DM</span>.<span class="m">ErrLog</span>(<span class="v">cUserDM</span>?.user?.login ?? <span class="v">context</span>.Session.SessionID, <span class="s">"DH.SetCookie"</span>, <span class="s">$"</span>{<span class="v">ex</span>.Message}<span class="s"> at </span>{<span class="v">ex</span>.<span class="m">LineNumber</span>()}<span class="s">"</span>);</div><div class="ln" style="left:31px;top:727px">792</div><div class="code" style="left:175px;top:727px">}</div><div class="t" style="left:380.5px;top:597.5px;height:16px;line-height:16px;color:#9A9A9A;font-size:10.5px;letter-spacing:0.184px;">≤2ms elapsed</div><div style="left:3px;top:11px;width:11px;height:11px;border-radius:6px;background:#E51400"></div><div style="left:3px;top:663px;width:11px;height:11px;border-radius:6px;background:#E51400"></div><svg style="left:4px;top:600px;" width="11" height="10" viewBox="0 0 11 10"><path d="M.700 3.100h4.500V1L9.800 5 5.200 9V6.900H.700z" fill="#FFDA1F" stroke="#5A4E14" stroke-width="1" stroke-linejoin="round"/></svg><svg style="left:56.5px;top:598.3px;" width="10" height="15" viewBox="0 0 10 15"><path d="M5 .400a4.600 4.600 0 0 0-2.400 8.500v1.500h4.800V8.900A4.600 4.600 0 0 0 5 .400z" fill="#FFCC00"/><path d="M3 4.200h4M4.200 4.200v4M5.800 4.200v4" stroke="#FFF3C0" stroke-width=".9" fill="none"/><rect x="3.200" y="11.500" width="3.600" height="1" fill="#6A6A6A"/><rect x="3.600" y="13.400" width="2.800" height="1" fill="#6A6A6A"/></svg><div style="left:80px;top:441px;width:9px;height:9px;background:#fff;border:1px solid #8A8A8A"></div><div style="left:82px;top:445px;width:5px;height:1px;background:#444"></div><div style="left:80px;top:473px;width:9px;height:9px;background:#fff;border:1px solid #8A8A8A"></div><div style="left:82px;top:477px;width:5px;height:1px;background:#444"></div><div style="left:85px;top:392px;width:4px;height:1px;background:#A5A5A5;"></div><div style="left:85px;top:408px;width:4px;height:1px;background:#A5A5A5;"></div><div style="left:350px;top:516px;width:12px;height:1px;background:repeating-linear-gradient(to right,#8A8A8A 0 2px,transparent 2px 4px)"></div><div style="left:1525px;top:0px;width:19px;height:730px;background:#E8E8EC;"></div><svg style="left:1530px;top:7px;" width="9" height="5" viewBox="0 0 9 5"><path d="M0 5L4.500 0 9 5z" fill="#868999"/></svg><svg style="left:1530px;top:720px;" width="9" height="5" viewBox="0 0 9 5"><path d="M0 0L4.500 5 9 0z" fill="#868999"/></svg><div style="left:1538px;top:18px;width:5px;height:5px;background:#A6A6A6;"></div><div style="left:1538px;top:40px;width:5px;height:21px;background:#A6A6A6;"></div><div style="left:1538px;top:63px;width:5px;height:16px;background:#A6A6A6;"></div><div style="left:1538px;top:84px;width:5px;height:29px;background:#A6A6A6;"></div><div style="left:1538px;top:121px;width:5px;height:5px;background:#A6A6A6;"></div><div style="left:1538px;top:134px;width:5px;height:26px;background:#A6A6A6;"></div><div style="left:1538px;top:164px;width:5px;height:32px;background:#A6A6A6;"></div><div style="left:1538px;top:204px;width:5px;height:41px;background:#A6A6A6;"></div><div style="left:1538px;top:249px;width:5px;height:14px;background:#A6A6A6;"></div><div style="left:1538px;top:267px;width:5px;height:7px;background:#A6A6A6;"></div><div style="left:1538px;top:278px;width:5px;height:54px;background:#A6A6A6;"></div><div style="left:1538px;top:336px;width:5px;height:6px;background:#A6A6A6;"></div><div style="left:1538px;top:352px;width:5px;height:7px;background:#A6A6A6;"></div><div style="left:1538px;top:364px;width:5px;height:14px;background:#A6A6A6;"></div><div style="left:1538px;top:392px;width:5px;height:9px;background:#A6A6A6;"></div><div style="left:1538px;top:410px;width:5px;height:8px;background:#A6A6A6;"></div><div style="left:1538px;top:422px;width:5px;height:17px;background:#A6A6A6;"></div><div style="left:1538px;top:449px;width:5px;height:6px;background:#A6A6A6;"></div><div style="left:1538px;top:467px;width:5px;height:28px;background:#A6A6A6;"></div><div style="left:1538px;top:498px;width:5px;height:6px;background:#A6A6A6;"></div><div style="left:1538px;top:509px;width:5px;height:6px;background:#A6A6A6;"></div><div style="left:1538px;top:531px;width:5px;height:6px;background:#A6A6A6;"></div><div style="left:1538px;top:541px;width:5px;height:39px;background:#A6A6A6;"></div><div style="left:1538px;top:592px;width:5px;height:7px;background:#A6A6A6;"></div><div style="left:1538px;top:604px;width:5px;height:7px;background:#A6A6A6;"></div><div style="left:1538px;top:615px;width:5px;height:7px;background:#A6A6A6;"></div><div style="left:1538px;top:628px;width:5px;height:20px;background:#A6A6A6;"></div><div style="left:1538px;top:650px;width:5px;height:8px;background:#A6A6A6;"></div><div style="left:1538px;top:664px;width:5px;height:15px;background:#A6A6A6;"></div><div style="left:1538px;top:696px;width:5px;height:15px;background:#A6A6A6;"></div><div style="left:1538px;top:79px;width:5px;height:5px;background:#0F8B0F;"></div><div style="left:1538px;top:197px;width:5px;height:6px;background:#0F8B0F;"></div><div style="left:1538px;top:658px;width:5px;height:6px;background:#0F8B0F;"></div><div style="left:1538px;top:681px;width:5px;height:14px;background:#0F8B0F;"></div><div style="left:1532px;top:73px;width:5px;height:8px;background:#963A46;"></div><div style="left:1532px;top:218px;width:5px;height:6px;background:#963A46;"></div><div style="left:1525px;top:76px;width:19px;height:2px;background:#0000CD;"></div></div>
<div style="left:551px;top:655px;width:245px;height:21px;background:#FDFDFF;border:1px solid #8E9BBC;box-shadow:1.5px 1.500px 2px rgba(40,50,90,.45);"></div>
<div style="left:553px;top:657px;width:240px;height:17px;background:#C1D0FA;"></div>
<svg style="left:553px;top:658px;" width="12" height="14" viewBox="0 0 12 14"><path d="M1.500 6.500V4.500a4 4 0 0 1 8 0v2" fill="none" stroke="#00539C" stroke-width="1.600"/><rect x="1" y="6.500" width="7" height="7" fill="#F5F7FF" stroke="#1E1E1E" stroke-width="1"/><path d="M3 9l2 1.500H3.500M3.500 11.500h2.500" stroke="#1E1E1E" stroke-width=".8" fill="none"/></svg>
<div class="t" style="left:572px;top:656.5px;height:16px;line-height:16px;color:#1E1E1E;font-size:12px;letter-spacing:-0.077px;">DM.cookie_name</div>
<div style="left:682px;top:658px;width:1px;height:15px;background:#9BA7C8;"></div>
<svg style="left:685px;top:658px;" width="14" height="14" viewBox="0 0 14 14"><circle cx="5" cy="5" r="3.600" fill="#F5F7FF" stroke="#5B5B5B" stroke-width="1.300"/><path d="M7.800 7.800L12.500 12" stroke="#424242" stroke-width="2.200"/></svg>
<svg style="left:702.5px;top:664px;" width="7" height="4" viewBox="0 0 7 4"><path d="M0 0h7L3.500 3.500z" fill="#6A6A6A"/></svg>
<div class="t" style="left:715.7px;top:656.5px;height:16px;line-height:16px;color:#1E1E1E;font-size:12px;letter-spacing:-0.163px;">"fgv_ueex"</div>
<svg style="left:777px;top:660px;" width="14" height="10" viewBox="0 0 14 10"><path d="M.500 5h4M5 1.500v7M5 3h7v4H5M12.300 2v6" fill="none" stroke="#7080A8" stroke-width="1"/><path d="M5 6.500h7" stroke="#7080A8" stroke-width="1.400"/></svg>
<svg style="left:728px;top:667px;" width="13" height="21" viewBox="0 0 13 21"><path d="M1.300 1.300v15.400l3.600-3.500 2.600 6 2.300-1-2.600-5.800h4.900z" fill="#fff" stroke="#000" stroke-width="1.100"/></svg>
<div style="left:7px;top:871px;width:1544px;height:17px;background:#EBECF2;"></div>
<div style="left:7px;top:871px;width:59px;height:17px;background:#FFFFFF;border:1px solid #DADDE8;"></div>
<div class="t" style="left:9.4px;top:872.0px;height:16px;line-height:16px;color:#1E1E1E;font-size:12px;letter-spacing:-0.886px;">100 %</div>
<svg style="left:57.5px;top:879px;" width="7" height="4" viewBox="0 0 7 4"><path d="M.300 0h6.400L3.500 3.500z" fill="#1E1E1E"/></svg>
<svg style="left:95px;top:875px;" width="10" height="10" viewBox="0 0 10 10"><circle cx="5" cy="5" r="5" fill="#E51400"/><path d="M3 3l4 4M7 3L3 7" stroke="#fff" stroke-width="1.400"/></svg>
<div class="t" style="left:110px;top:872.0px;height:16px;line-height:16px;color:#1E1E1E;font-size:12px;">0</div>
<svg style="left:141px;top:875px;" width="11" height="10" viewBox="0 0 11 10"><path d="M5.500 0L11 10H0z" fill="#FFCC00" stroke="#C89B00" stroke-width=".5"/><path d="M5.500 3.500v3.500M5.500 8v1.200" stroke="#1E1E1E" stroke-width="1.200"/></svg>
<div class="t" style="left:156px;top:872.0px;height:16px;line-height:16px;color:#1E1E1E;font-size:12px;">7</div>
<svg style="left:194px;top:874px;" width="13" height="12" viewBox="0 0 13 12"><path d="M13 6H2M6.500 1L1.500 6l5 5" fill="none" stroke="#00539C" stroke-width="1.800"/></svg>
<svg style="left:222px;top:874px;" width="13" height="12" viewBox="0 0 13 12"><path d="M0 6h11M6.500 1l5 5-5 5" fill="none" stroke="#00539C" stroke-width="1.800"/></svg>
<div style="left:249px;top:873px;width:1px;height:14px;background:#B8BED0"></div>
<svg style="left:263px;top:873px;" width="14" height="14" viewBox="0 0 14 14"><path d="M3 8l6-6 3 3-6 6z" fill="#6A6A6A"/><path d="M2 9l3 3-1.500 2H1z" fill="#424242"/><path d="M8 1l5 5" stroke="#424242" stroke-width="1.200"/></svg>
<svg style="left:281px;top:879px;" width="7" height="4" viewBox="0 0 7 4"><path d="M.300 0h6.400L3.500 3.500z" fill="#1E1E1E"/></svg>
<svg style="left:318px;top:876px;" width="5" height="9" viewBox="0 0 5 9"><path d="M5 0L0 4.500 5 9z" fill="#868999"/></svg>
<div style="left:330px;top:875px;width:850px;height:10px;background:#C2C3C9;"></div>
<svg style="left:1339px;top:876px;" width="5" height="9" viewBox="0 0 5 9"><path d="M0 0l5 4.500L0 9z" fill="#868999"/></svg>
<div class="t" style="left:1372.2px;top:872.0px;height:16px;line-height:16px;color:#1E1E1E;font-size:12px;letter-spacing:-0.578px;">Ln: 784</div>
<div class="t" style="left:1426.3px;top:872.0px;height:16px;line-height:16px;color:#1E1E1E;font-size:12px;letter-spacing:-0.560px;">Ch: 17</div>
<div class="t" style="left:1477.2px;top:872.0px;height:16px;line-height:16px;color:#1E1E1E;font-size:12px;letter-spacing:-1.829px;">SPC</div>
<div class="t" style="left:1516.3px;top:872.0px;height:16px;line-height:16px;color:#1E1E1E;font-size:12px;letter-spacing:-1.536px;">CRLF</div>
<div style="left:7px;top:896px;width:1544px;height:21px;background:#40568D;"></div>
<div class="t" style="left:11.3px;top:899.0px;height:16px;line-height:16px;color:#fff;font-size:12px;letter-spacing:0.099px;">Find "LogOff"</div>
<svg style="left:1503px;top:905px;" width="7" height="4" viewBox="0 0 7 4"><path d="M.300 0h6.400L3.500 3.500z" fill="#B9C3E3"/></svg>
<svg style="left:1519px;top:901px;" width="9" height="11" viewBox="0 0 9 11"><path d="M4.500 11V7M1 6.500h7M2.500 6.500v-6h4v6" fill="none" stroke="#D0D8F0" stroke-width="1"/><path d="M5.800 .500v6" stroke="#D0D8F0" stroke-width="1.600"/></svg>
<svg style="left:1535px;top:902px;" width="10" height="10" viewBox="0 0 10 10"><path d="M.5 .5l9 9M9.5 .5l-9 9" stroke="#C8D0EA" stroke-width="1.2"/></svg>
<div style="left:7px;top:917px;width:1544px;height:26px;background:#CCD5F0;"></div>
<div style="left:14px;top:920px;width:150px;height:20px;background:#F5F7FF;"></div>
<div class="t" style="left:18.3px;top:922.5px;height:16px;line-height:16px;color:#1E1E1E;font-size:12px;letter-spacing:-0.246px;">All Files</div>
<svg style="left:153px;top:929px;" width="7" height="4" viewBox="0 0 7 4"><path d="M.300 0h6.400L3.500 3.500z" fill="#000"/></svg>
<div style="left:170px;top:921px;width:1px;height:18px;background:#8E9BBC"></div>
<svg style="left:179px;top:922px;" width="14" height="16" viewBox="0 0 14 16"><rect x="5.500" y="1.500" width="7" height="9.500" fill="#DCDAF0" stroke="#424242" stroke-width="1.100"/><rect x="1.500" y="5.500" width="7" height="9.500" fill="#DCDAF0" stroke="#424242" stroke-width="1.100"/></svg>
<div style="left:200px;top:921px;width:1px;height:18px;background:#8E9BBC"></div>
<svg style="left:209px;top:923px;" width="14" height="13" viewBox="0 0 14 13"><path d="M8 4H2.500" stroke="#00539C" stroke-width="2"/><path d="M4.800 .800L1.500 4l3.300 3.200" fill="none" stroke="#00539C" stroke-width="2"/><path d="M7 6.300h6" stroke="#1E1E1E" stroke-width=".9"/><path d="M3 9h10" stroke="#1E1E1E" stroke-width="1.500"/><path d="M3 11.600h10" stroke="#1E1E1E" stroke-width="1"/></svg>
<svg style="left:231px;top:923px;" width="14" height="13" viewBox="0 0 14 13"><path d="M.800 4H6.500" stroke="#00539C" stroke-width="2"/><path d="M4.200 .800L7.500 4 4.200 7.200" fill="none" stroke="#00539C" stroke-width="2"/><path d="M7.500 6.300h5.500" stroke="#1E1E1E" stroke-width=".9"/><path d="M3 9h10" stroke="#1E1E1E" stroke-width="1.500"/><path d="M3 11.600h10" stroke="#1E1E1E" stroke-width="1"/></svg>
<div style="left:252px;top:921px;width:1px;height:18px;background:#8E9BBC"></div>
<svg style="left:260px;top:922px;" width="16" height="16" viewBox="0 0 16 16"><path d="M7.500 6.500h7.500L12 10v5l-1.800-1V10z" fill="#A9B0C4"/><path d="M1.500 1.500l6 6M7.500 1.500l-6 6" stroke="#A9B0C4" stroke-width="2"/></svg>
<div style="left:282px;top:921px;width:1px;height:19px;background:#8E9BBC"></div>
<div class="t" style="left:290.3px;top:922.5px;height:16px;line-height:16px;color:#1E1E1E;font-size:12px;letter-spacing:-0.123px;">Group by:</div>
<div style="left:348px;top:920px;width:175px;height:20px;background:#F5F7FF;"></div>
<div class="t" style="left:352px;top:922.5px;height:16px;line-height:16px;color:#1E1E1E;font-size:12px;letter-spacing:-0.110px;">Path then File</div>
<svg style="left:513px;top:929px;" width="7" height="4" viewBox="0 0 7 4"><path d="M.300 0h6.400L3.500 3.500z" fill="#000"/></svg>
<div style="left:530px;top:921px;width:1px;height:19px;background:#8E9BBC"></div>
<svg style="left:540px;top:926px;" width="9" height="9" viewBox="0 0 9 9"><path d="M.5 .5l8 8M8.5 .5l-8 8" stroke="#B4BACB" stroke-width="1.6"/></svg>
<svg style="left:559px;top:922px;" width="15" height="15" viewBox="-1 -1.500 15 15"><path d="M7 2.400A5 5 0 1 0 12 7.400" fill="none" stroke="#00539C" stroke-width="2.200"/><path d="M6 -1L10.800 2.500 6 5.800z" fill="#00539C"/></svg>
<div class="t" style="left:579.2px;top:922.0px;height:16px;line-height:16px;color:#1E1E1E;font-size:12px;letter-spacing:-0.307px;">Repeat Find</div>
<div style="left:652px;top:921px;width:1px;height:19px;background:#8E9BBC"></div>
<svg style="left:663px;top:923px;" width="9" height="13" viewBox="0 0 9 13"><rect x="0" y="5" width="9" height="8" fill="#424242"/><path d="M2 5V2.500a2.500 2.500 0 0 1 5 0V5" fill="none" stroke="#424242" stroke-width="1.400"/><rect x="3.500" y="8" width="2" height="2.500" fill="#CCD5F0"/></svg>
<div class="t" style="left:680.3px;top:922.0px;height:16px;line-height:16px;color:#1E1E1E;font-size:12px;letter-spacing:-0.465px;">Keep Results</div>
<svg style="left:759px;top:924px;" width="13" height="12" viewBox="0 0 13 12"><rect x=".500" y=".500" width="12" height="11" fill="none" stroke="#424242"/><path d="M0 3.500h13M0 6h13M0 8.500h13M3.500 0v12" stroke="#424242" stroke-width="1"/></svg>
<div class="t" style="left:777.5px;top:922.0px;height:16px;line-height:16px;color:#1E1E1E;font-size:12px;letter-spacing:-0.224px;">List View</div>
<div style="left:1351px;top:920px;width:200px;height:20px;background:#FFFFFF;border:1px solid #C5CCE6;"></div>
<div class="t" style="left:1356.2px;top:922.0px;height:16px;line-height:16px;color:#6A6A6A;font-size:12px;letter-spacing:-0.371px;">Search Find Results</div>
<svg style="left:1523px;top:923px;" width="13" height="13" viewBox="0 0 13 13"><circle cx="8.300" cy="4.700" r="3.400" fill="none" stroke="#5B5B5B" stroke-width="1.700"/><path d="M5.800 7.200L1 12" stroke="#5B5B5B" stroke-width="2.200"/></svg>
<svg style="left:1539px;top:929px;" width="6" height="3" viewBox="0 0 6 3"><path d="M0 0h6L3 3z" fill="#424242"/></svg>
<div style="left:7px;top:943px;width:1544px;height:47px;background:#F7F9FE;"></div>
<div class="t" style="left:14.3px;top:943.0px;height:16px;line-height:16px;color:#1E1E1E;font-size:12px;letter-spacing:-0.026px;">Find all "LogOff", Include miscellaneous files, Entire solution, "*.js"</div>
<div style="left:7px;top:961px;width:1544px;height:15px;background:#F4F4F6;"></div>
<div class="t" style="left:13.3px;top:963.0px;height:16px;line-height:16px;color:#1E1E1E;font-size:12px;letter-spacing:-0.247px;">Code</div>
<div class="t" style="left:1310.3px;top:963.0px;height:16px;line-height:16px;color:#1E1E1E;font-size:12px;letter-spacing:-0.336px;">File</div>
<div class="t" style="left:1460.3px;top:963.0px;height:16px;line-height:16px;color:#1E1E1E;font-size:12px;letter-spacing:-0.122px;">Line</div>
<div class="t" style="left:1495.3px;top:963.0px;height:16px;line-height:16px;color:#1E1E1E;font-size:12px;letter-spacing:-0.072px;">Col</div>
<div style="left:1306px;top:962px;width:1px;height:13px;background:#C8CBD6;"></div>
<div style="left:1456px;top:962px;width:1px;height:13px;background:#C8CBD6;"></div>
<div style="left:1491px;top:962px;width:1px;height:13px;background:#C8CBD6;"></div>
<div style="left:1526px;top:962px;width:1px;height:13px;background:#C8CBD6;"></div>
<div style="left:1532px;top:962px;width:1px;height:13px;background:#C8CBD6;"></div>
<div style="left:1535px;top:962px;width:14px;height:13px;background:#E4E5EA;"></div>
<div class="t" style="left:14.3px;top:975.0px;height:16px;line-height:16px;color:#1E1E1E;font-size:12px;letter-spacing:-0.109px;">Matching lines: 2 Matching files: 1 Total files searched: 559</div>
<div style="left:7px;top:990px;width:83px;height:19px;background:#F7F9FE;"></div>
<div class="t" style="left:12.5px;top:991.7px;height:16px;line-height:16px;color:#1E1E1E;font-size:12px;letter-spacing:0.099px;">Find "LogOff"</div>
<div style="left:92px;top:991px;width:51px;height:18px;background:#40568D;"></div>
<div class="t" style="left:98px;top:991.7px;height:16px;line-height:16px;color:#fff;font-size:12px;letter-spacing:-0.576px;">Threads</div>
<div style="left:145px;top:991px;width:43px;height:18px;background:#40568D;"></div>
<div class="t" style="left:150.5px;top:991.7px;height:16px;line-height:16px;color:#fff;font-size:12px;letter-spacing:-0.331px;">Locals</div>
<div style="left:190px;top:991px;width:53px;height:18px;background:#40568D;"></div>
<div class="t" style="left:195.3px;top:991.7px;height:16px;line-height:16px;color:#fff;font-size:12px;letter-spacing:-0.168px;">Watch 1</div>
<div style="left:245px;top:991px;width:41px;height:18px;background:#40568D;"></div>
<div class="t" style="left:250.3px;top:991.7px;height:16px;line-height:16px;color:#fff;font-size:12px;letter-spacing:0.002px;">Autos</div>
<div style="left:288px;top:991px;width:61px;height:18px;background:#40568D;"></div>
<div class="t" style="left:293.3px;top:991.7px;height:16px;line-height:16px;color:#fff;font-size:12px;letter-spacing:-0.283px;">Call Stack</div>
<div style="left:351px;top:991px;width:72px;height:18px;background:#40568D;"></div>
<div class="t" style="left:356.3px;top:991.7px;height:16px;line-height:16px;color:#fff;font-size:12px;letter-spacing:-0.125px;">Breakpoints</div>
<div style="left:425px;top:991px;width:107px;height:18px;background:#40568D;"></div>
<div class="t" style="left:430.5px;top:991.7px;height:16px;line-height:16px;color:#fff;font-size:12px;letter-spacing:-0.145px;">Exception Settings</div>
<div style="left:534px;top:991px;width:114px;height:18px;background:#40568D;"></div>
<div class="t" style="left:539.5px;top:991.7px;height:16px;line-height:16px;color:#fff;font-size:12px;letter-spacing:0.152px;">Command Window</div>
<div style="left:650px;top:991px;width:48px;height:18px;background:#40568D;"></div>
<div class="t" style="left:655.3px;top:991.7px;height:16px;line-height:16px;color:#fff;font-size:12px;letter-spacing:0.278px;">Output</div>
<div style="left:700px;top:991px;width:56px;height:18px;background:#40568D;"></div>
<div class="t" style="left:705.3px;top:991.7px;height:16px;line-height:16px;color:#fff;font-size:12px;letter-spacing:-0.259px;">Error List</div>
<div style="left:758px;top:991px;width:53px;height:18px;background:#40568D;"></div>
<div class="t" style="left:763.3px;top:991.7px;height:16px;line-height:16px;color:#fff;font-size:12px;letter-spacing:-0.399px;">Task List</div>
<div style="left:1559px;top:98px;width:354px;height:21px;background:#40568D;"></div>
<div class="t" style="left:1563px;top:100.5px;height:16px;line-height:16px;color:#fff;font-size:12px;letter-spacing:-0.064px;">Solution Explorer</div>
<svg style="left:1865px;top:106px;" width="7" height="4" viewBox="0 0 7 4"><path d="M.300 0h6.400L3.500 3.500z" fill="#B9C3E3"/></svg>
<svg style="left:1881px;top:102px;" width="9" height="11" viewBox="0 0 9 11"><path d="M4.500 11V7M1 6.500h7M2.500 6.500v-6h4v6" fill="none" stroke="#D0D8F0" stroke-width="1"/><path d="M5.800 .500v6" stroke="#D0D8F0" stroke-width="1.600"/></svg>
<svg style="left:1897px;top:103px;" width="10" height="10" viewBox="0 0 10 10"><path d="M.5 .5l9 9M9.5 .5l-9 9" stroke="#C8D0EA" stroke-width="1.2"/></svg>
<div style="left:1559px;top:119px;width:354px;height:29px;background:#CCD5F0;"></div>
<svg style="left:1567px;top:126px;" width="14" height="14" viewBox="0 0 14 14"><circle cx="7" cy="7" r="6.400" fill="#A9B0C4"/><path d="M10.800 7H4.200" stroke="#CDD2E6" stroke-width="1.900"/><path d="M7 3.800L3.800 7 7 10.200" fill="none" stroke="#CDD2E6" stroke-width="1.900"/></svg>
<svg style="left:1589px;top:126px;" width="14" height="14" viewBox="0 0 14 14"><circle cx="7" cy="7" r="6.400" fill="#A9B0C4"/><g transform="translate(14,0) scale(-1,1)"><path d="M10.800 7H4.200" stroke="#CDD2E6" stroke-width="1.900"/><path d="M7 3.800L3.800 7 7 10.200" fill="none" stroke="#CDD2E6" stroke-width="1.900"/></g></svg>
<svg style="left:1610px;top:125px;" width="16" height="16" viewBox="0 0 16 16"><path d="M8 1.800L1.800 8h1.700v6h9V8h1.700L11.500 5.300V2h-1.300v2z" fill="#DCDCEE" stroke="#3B3B3B" stroke-width="1.200" stroke-linejoin="round"/><rect x="6.500" y="9" width="3" height="5" fill="#3B3B3B"/></svg>
<svg style="left:1632px;top:125px;" width="16" height="16" viewBox="0 0 16 16"><rect x="6.500" y="1.500" width="8" height="10.500" fill="#F0F0F8" stroke="#3B3B3B"/><rect x="6.500" y="1.500" width="8" height="2" fill="#3B3B3B"/><path d="M8.500 5.500h1M10.500 5.500h3M8.500 7.500h1M10.500 7.500h3M8.500 9.500h1M10.500 9.500h3" stroke="#3B3B3B"/><path d="M6.800 7.200l1.800 .9v6.300l-1.800 .9-3.600-3.400-1.400 1.100-.8-.4v-3.200l.8-.4 1.400 1.100zM7 9.600L4.800 11.200 7 12.800z" fill="#9A32D8" fill-rule="evenodd"/></svg>
<div style="left:1654px;top:124px;width:1px;height:19px;background:#8E9BBC"></div>
<svg style="left:1663px;top:125px;" width="16" height="16" viewBox="0 0 16 16"><circle cx="10" cy="9.500" r="4.600" fill="#DCDCEE" stroke="#3B3B3B" stroke-width="1.200"/><path d="M10 6.800v3h2.500" fill="none" stroke="#3B3B3B" stroke-width="1.100"/><path d="M1.500 1.500h5M4 1.500v3.500" stroke="#3B3B3B" stroke-width="1.300"/></svg>
<svg style="left:1684px;top:132px;" width="7" height="4" viewBox="0 0 7 4"><path d="M.300 0h6.400L3.500 3.500z" fill="#1E1E1E"/></svg>
<svg style="left:1696px;top:125px;" width="16" height="16" viewBox="0 0 16 16"><path d="M2.500 7A5.500 5.500 0 0 1 12.500 4.500" fill="none" stroke="#00539C" stroke-width="2.200"/><path d="M14.500 1v5.500H9z" fill="#00539C"/><path d="M13.500 9A5.500 5.500 0 0 1 3.500 11.500" fill="none" stroke="#00539C" stroke-width="2.200"/><path d="M1.500 15V9.500H7z" fill="#00539C"/></svg>
<svg style="left:1720px;top:125px;" width="15.5" height="15.5" viewBox="-1 -1.500 15 15"><path d="M7 2.400A5 5 0 1 0 12 7.400" fill="none" stroke="#A9B0C4" stroke-width="2.200"/><path d="M6 -1L10.800 2.500 6 5.800z" fill="#A9B0C4"/></svg>
<svg style="left:1744px;top:127px;" width="13" height="12" viewBox="0 0 13 12"><rect x="4.500" y=".500" width="8" height="6" fill="none" stroke="#424242"/><rect x="2.500" y="2.500" width="8" height="6" fill="#CCD5F0" stroke="#424242"/><rect x=".500" y="4.500" width="8" height="6" fill="#CCD5F0" stroke="#424242"/><path d="M2.500 7.500h4" stroke="#00539C" stroke-width="1.400"/></svg>
<div style="left:1760px;top:121px;width:22px;height:24px;background:#FFECBF;border:1px solid #A07A20;"></div>
<svg style="left:1763px;top:125px;" width="16" height="16" viewBox="0 0 16 16"><path d="M1.500 1.500h6l2 2v7h-8z" fill="#FFECBF" stroke="#424242"/><path d="M5.500 5.500h6l2 2v7h-8z" fill="#FFECBF" stroke="#424242"/><path d="M7.500 9h4M7.500 11h4M7.500 13h4" stroke="#388A34" stroke-width="1"/></svg>
<div style="left:1785px;top:124px;width:1px;height:19px;background:#8E9BBC"></div>
<svg style="left:1794px;top:128px;" width="14" height="10" viewBox="0 0 14 10"><path d="M5 .800L1 5l4 4.200M9 .800L13 5 9 9.200" fill="none" stroke="#1E1E1E" stroke-width="1.600"/></svg>
<svg style="left:1815px;top:125px;" width="16" height="16" viewBox="0 0 16 16"><path d="M15 4.800a4.300 4.300 0 0 1-5.800 3.800L3.800 14.800a1.700 1.700 0 0 1-2.500-2.500L7.400 6.600A4.300 4.300 0 0 1 11.300 .900L9.200 3.300l.6 2.500 2.500 .6z" fill="#3B3B3B"/></svg>
<div style="left:1834px;top:121px;width:22px;height:24px;background:#FFECBF;border:1px solid #A07A20;"></div>
<svg style="left:1837px;top:130px;" width="16" height="6" viewBox="0 0 16 6"><rect x="0" y="3" width="16" height="1.400" fill="#1E1E1E"/><rect x="8" y="0" width="7" height="4" fill="#1E1E1E"/></svg>
<div style="left:1559px;top:148px;width:353px;height:19px;background:#FFFFFF;border:1px solid #E6EAF8;"></div>
<div class="t" style="left:1564px;top:150.0px;height:16px;line-height:16px;color:#6A6A6A;font-size:12px;letter-spacing:-0.124px;">Search Solution Explorer (Ctrl+;)</div>
<svg style="left:1884px;top:151px;" width="13" height="13" viewBox="0 0 13 13"><circle cx="8.300" cy="4.700" r="3.400" fill="none" stroke="#5B5B5B" stroke-width="1.700"/><path d="M5.800 7.200L1 12" stroke="#5B5B5B" stroke-width="2.200"/></svg>
<svg style="left:1902px;top:157px;" width="6" height="3" viewBox="0 0 6 3"><path d="M0 0h6L3 3z" fill="#424242"/></svg>
<div style="left:1559px;top:167px;width:354px;height:3px;background:#C9D3F0;"></div>
<div style="left:1559px;top:170px;width:337px;height:730px;overflow:hidden;background:#F7F9FE;"><svg style="left:64px;top:4px;" width="8" height="12" viewBox="0 0 8 12"><path d="M1.5 1.700L6.200 6 1.500 10.300z" fill="none" stroke="#1E1E1E" stroke-width="1.150"/></svg><svg style="left:77px;top:6px;" width="8" height="9" viewBox="0 0 8 9"><rect x=".800" y="4.500" width="5.400" height="3.700" fill="#1BA1E2"/><path d="M1.500 3.600V3a2 2 0 0 1 4 0v.600" fill="none" stroke="#1BA1E2" stroke-width="1.100"/><rect x="2.800" y="5.200" width="1.400" height="1.700" fill="#fff"/></svg><svg style="left:87px;top:2px;" width="14" height="15" viewBox="0 0 14 15"><path d="M2.400 7.500v6h9V5l-3-3H6.500" fill="#ECECF4" stroke="#3B3B3B" stroke-width="1.100"/><path d="M8 1.500L12 5.500H8z" fill="#3B3B3B"/><path d="M0 4h5.800" stroke="#00539C" stroke-width="1.700"/><path d="M3 1l3.200 3L3 7" fill="none" stroke="#00539C" stroke-width="1.700"/></svg><div class="t" style="left:107.29999999999995px;top:2.0px;height:16px;line-height:16px;color:#1E1E1E;font-size:12px;letter-spacing:-0.256px;">TenderRecord.ascx.designer.cs</div><svg style="left:28px;top:22px;" width="8" height="12" viewBox="0 0 8 12"><path d="M1.5 1.700L6.200 6 1.500 10.300z" fill="none" stroke="#1E1E1E" stroke-width="1.150"/></svg><svg style="left:51px;top:22px;" width="14" height="12" viewBox="0 0 14 12"><path d="M0 0h8l1.500 2H13v9H0z" fill="#DCB67A"/><path d="M1.200 1.300h6" stroke="#F0DDBB" stroke-width="1"/></svg><div class="t" style="left:71.29999999999995px;top:20.0px;height:16px;line-height:16px;color:#1E1E1E;font-size:12px;letter-spacing:-0.800px;">css</div><svg style="left:28px;top:40px;" width="8" height="12" viewBox="0 0 8 12"><path d="M1.5 1.700L6.200 6 1.500 10.300z" fill="none" stroke="#1E1E1E" stroke-width="1.150"/></svg><svg style="left:51px;top:40px;" width="14" height="12" viewBox="0 0 14 12"><path d="M0 0h8l1.500 2H13v9H0z" fill="#DCB67A"/><path d="M1.200 1.300h6" stroke="#F0DDBB" stroke-width="1"/></svg><div class="t" style="left:71.29999999999995px;top:38.0px;height:16px;line-height:16px;color:#1E1E1E;font-size:12px;letter-spacing:0.155px;">filter</div><svg style="left:28px;top:58px;" width="8" height="12" viewBox="0 0 8 12"><path d="M1.5 1.700L6.200 6 1.500 10.300z" fill="none" stroke="#1E1E1E" stroke-width="1.150"/></svg><svg style="left:51px;top:58px;" width="14" height="12" viewBox="0 0 14 12"><path d="M0 0h8l1.500 2H13v9H0z" fill="#DCB67A"/><path d="M1.200 1.300h6" stroke="#F0DDBB" stroke-width="1"/></svg><div class="t" style="left:71.29999999999995px;top:56.0px;height:16px;line-height:16px;color:#1E1E1E;font-size:12px;letter-spacing:-0.282px;">Filters</div><svg style="left:28px;top:78px;" width="8" height="8" viewBox="0 0 8 8"><path d="M7.1 .7v6.400H.6z" fill="#1E1E1E"/></svg><svg style="left:51px;top:76px;" width="15" height="12" viewBox="0 0 15 12"><path d="M.600 10.500V.600h7l1.500 2.200h4v3.500" fill="#FBFCFF" stroke="#DCB67A" stroke-width="1.200"/><path d="M2.600 6.300H14.200L12 11H.300z" fill="#DCB67A"/></svg><div class="t" style="left:71.29999999999995px;top:74.0px;height:16px;line-height:16px;color:#1E1E1E;font-size:12px;letter-spacing:-0.141px;">Handlers</div><svg style="left:46px;top:94px;" width="8" height="12" viewBox="0 0 8 12"><path d="M1.5 1.700L6.200 6 1.500 10.300z" fill="none" stroke="#1E1E1E" stroke-width="1.150"/></svg><svg style="left:59px;top:96px;" width="8" height="9" viewBox="0 0 8 9"><rect x=".800" y="4.500" width="5.400" height="3.700" fill="#1BA1E2"/><path d="M1.500 3.600V3a2 2 0 0 1 4 0v.600" fill="none" stroke="#1BA1E2" stroke-width="1.100"/><rect x="2.800" y="5.200" width="1.400" height="1.700" fill="#fff"/></svg><svg style="left:68px;top:94px;" width="16" height="12" viewBox="0 0 16 12"><circle cx="10.100" cy="5.900" r="4.600" fill="none" stroke="#2A2A2A" stroke-width="1.100"/><path d="M5.500 4.400h9.200M5.500 7.400h9.200M8.600 1.500v8.800M11.600 1.500v8.800" stroke="#2A2A2A" stroke-width=".9" fill="none"/><path d="M.700 3.200h3.500M1.700 5.400h2.500M.700 7.600h3.500" stroke="#2A2A2A" stroke-width="1"/></svg><div class="t" style="left:89.29999999999995px;top:92.0px;height:16px;line-height:16px;color:#1E1E1E;font-size:12px;letter-spacing:-0.004px;">AdminHandler.ashx</div><svg style="left:46px;top:114px;" width="8" height="8" viewBox="0 0 8 8"><path d="M7.1 .7v6.400H.6z" fill="#1E1E1E"/></svg><svg style="left:59px;top:114px;" width="8" height="9" viewBox="0 0 8 9"><rect x=".800" y="4.500" width="5.400" height="3.700" fill="#1BA1E2"/><path d="M1.500 3.600V3a2 2 0 0 1 4 0v.600" fill="none" stroke="#1BA1E2" stroke-width="1.100"/><rect x="2.800" y="5.200" width="1.400" height="1.700" fill="#fff"/></svg><svg style="left:68px;top:112px;" width="16" height="12" viewBox="0 0 16 12"><circle cx="10.100" cy="5.900" r="4.600" fill="none" stroke="#2A2A2A" stroke-width="1.100"/><path d="M5.500 4.400h9.200M5.500 7.400h9.200M8.600 1.500v8.800M11.600 1.500v8.800" stroke="#2A2A2A" stroke-width=".9" fill="none"/><path d="M.700 3.200h3.500M1.700 5.400h2.500M.700 7.600h3.500" stroke="#2A2A2A" stroke-width="1"/></svg><div class="t" style="left:89.29999999999995px;top:110.0px;height:16px;line-height:16px;color:#1E1E1E;font-size:12px;letter-spacing:-0.224px;">DataHandler.ashx</div><div style="left:0;top:126px;width:337px;height:18px;background:#E6E7EF"></div><svg style="left:64px;top:130px;" width="8" height="12" viewBox="0 0 8 12"><path d="M1.5 1.700L6.200 6 1.500 10.300z" fill="none" stroke="#1E1E1E" stroke-width="1.150"/></svg><svg style="left:77px;top:132px;" width="8" height="9" viewBox="0 0 8 9"><path d="M1.300 4.300L3.300 6.600 6.600 .900" fill="none" stroke="#E51400" stroke-width="1.700"/></svg><svg style="left:87px;top:128px;" width="14" height="15" viewBox="0 0 14 15"><path d="M2.400 7.500v6h9V5l-3-3H6.500" fill="#ECECF4" stroke="#3B3B3B" stroke-width="1.100"/><path d="M8 1.500L12 5.500H8z" fill="#3B3B3B"/><path d="M0 4h5.800" stroke="#00539C" stroke-width="1.700"/><path d="M3 1l3.200 3L3 7" fill="none" stroke="#00539C" stroke-width="1.700"/></svg><div class="t" style="left:107.29999999999995px;top:128.0px;height:16px;line-height:16px;color:#1E1E1E;font-size:12px;letter-spacing:-0.207px;">DataHandler.ashx.cs</div><svg style="left:46px;top:150px;" width="8" height="8" viewBox="0 0 8 8"><path d="M7.1 .7v6.400H.6z" fill="#1E1E1E"/></svg><svg style="left:59px;top:150px;" width="8" height="9" viewBox="0 0 8 9"><path d="M1.300 4.300L3.300 6.600 6.600 .900" fill="none" stroke="#E51400" stroke-width="1.700"/></svg><svg style="left:68px;top:148px;" width="16" height="12" viewBox="0 0 16 12"><circle cx="10.100" cy="5.900" r="4.600" fill="none" stroke="#2A2A2A" stroke-width="1.100"/><path d="M5.500 4.400h9.200M5.500 7.400h9.200M8.600 1.500v8.800M11.600 1.500v8.800" stroke="#2A2A2A" stroke-width=".9" fill="none"/><path d="M.700 3.200h3.500M1.700 5.400h2.500M.700 7.600h3.500" stroke="#2A2A2A" stroke-width="1"/></svg><div class="t" style="left:89.29999999999995px;top:146.0px;height:16px;line-height:16px;color:#1E1E1E;font-size:12px;letter-spacing:-0.133px;">DirectHandler.ashx</div><svg style="left:64px;top:166px;" width="8" height="12" viewBox="0 0 8 12"><path d="M1.5 1.700L6.200 6 1.500 10.300z" fill="none" stroke="#1E1E1E" stroke-width="1.150"/></svg><svg style="left:77px;top:168px;" width="8" height="9" viewBox="0 0 8 9"><rect x=".800" y="4.500" width="5.400" height="3.700" fill="#1BA1E2"/><path d="M1.500 3.600V3a2 2 0 0 1 4 0v.600" fill="none" stroke="#1BA1E2" stroke-width="1.100"/><rect x="2.800" y="5.200" width="1.400" height="1.700" fill="#fff"/></svg><svg style="left:87px;top:164px;" width="14" height="15" viewBox="0 0 14 15"><path d="M2.400 7.500v6h9V5l-3-3H6.500" fill="#ECECF4" stroke="#3B3B3B" stroke-width="1.100"/><path d="M8 1.500L12 5.500H8z" fill="#3B3B3B"/><path d="M0 4h5.800" stroke="#00539C" stroke-width="1.700"/><path d="M3 1l3.200 3L3 7" fill="none" stroke="#00539C" stroke-width="1.700"/></svg><div class="t" style="left:107.29999999999995px;top:164.0px;height:16px;line-height:16px;color:#1E1E1E;font-size:12px;letter-spacing:-0.139px;">DirectHandler.ashx.cs</div><svg style="left:46px;top:184px;" width="8" height="12" viewBox="0 0 8 12"><path d="M1.5 1.700L6.200 6 1.500 10.300z" fill="none" stroke="#1E1E1E" stroke-width="1.150"/></svg><svg style="left:59px;top:186px;" width="8" height="9" viewBox="0 0 8 9"><rect x=".800" y="4.500" width="5.400" height="3.700" fill="#1BA1E2"/><path d="M1.500 3.600V3a2 2 0 0 1 4 0v.600" fill="none" stroke="#1BA1E2" stroke-width="1.100"/><rect x="2.800" y="5.200" width="1.400" height="1.700" fill="#fff"/></svg><svg style="left:68px;top:184px;" width="16" height="12" viewBox="0 0 16 12"><circle cx="10.100" cy="5.900" r="4.600" fill="none" stroke="#2A2A2A" stroke-width="1.100"/><path d="M5.500 4.400h9.200M5.500 7.400h9.200M8.600 1.500v8.800M11.600 1.500v8.800" stroke="#2A2A2A" stroke-width=".9" fill="none"/><path d="M.700 3.200h3.500M1.700 5.400h2.500M.700 7.600h3.500" stroke="#2A2A2A" stroke-width="1"/></svg><div class="t" style="left:89.29999999999995px;top:182.0px;height:16px;line-height:16px;color:#1E1E1E;font-size:12px;letter-spacing:-0.037px;">DocumentHandler.ashx</div><svg style="left:46px;top:204px;" width="8" height="8" viewBox="0 0 8 8"><path d="M7.1 .7v6.400H.6z" fill="#1E1E1E"/></svg><svg style="left:59px;top:204px;" width="8" height="9" viewBox="0 0 8 9"><rect x=".800" y="4.500" width="5.400" height="3.700" fill="#1BA1E2"/><path d="M1.500 3.600V3a2 2 0 0 1 4 0v.600" fill="none" stroke="#1BA1E2" stroke-width="1.100"/><rect x="2.800" y="5.200" width="1.400" height="1.700" fill="#fff"/></svg><svg style="left:68px;top:202px;" width="16" height="12" viewBox="0 0 16 12"><circle cx="10.100" cy="5.900" r="4.600" fill="none" stroke="#2A2A2A" stroke-width="1.100"/><path d="M5.500 4.400h9.200M5.500 7.400h9.200M8.600 1.500v8.800M11.600 1.500v8.800" stroke="#2A2A2A" stroke-width=".9" fill="none"/><path d="M.700 3.200h3.500M1.700 5.400h2.500M.700 7.600h3.500" stroke="#2A2A2A" stroke-width="1"/></svg><div class="t" style="left:89.29999999999995px;top:200.0px;height:16px;line-height:16px;color:#1E1E1E;font-size:12px;letter-spacing:-0.194px;">EditDataHandler.ashx</div><svg style="left:64px;top:220px;" width="8" height="12" viewBox="0 0 8 12"><path d="M1.5 1.700L6.200 6 1.500 10.300z" fill="none" stroke="#1E1E1E" stroke-width="1.150"/></svg><svg style="left:77px;top:222px;" width="8" height="9" viewBox="0 0 8 9"><path d="M1.300 4.300L3.300 6.600 6.600 .900" fill="none" stroke="#E51400" stroke-width="1.700"/></svg><svg style="left:87px;top:218px;" width="14" height="15" viewBox="0 0 14 15"><path d="M2.400 7.500v6h9V5l-3-3H6.500" fill="#ECECF4" stroke="#3B3B3B" stroke-width="1.100"/><path d="M8 1.500L12 5.500H8z" fill="#3B3B3B"/><path d="M0 4h5.800" stroke="#00539C" stroke-width="1.700"/><path d="M3 1l3.200 3L3 7" fill="none" stroke="#00539C" stroke-width="1.700"/></svg><div class="t" style="left:107.29999999999995px;top:218.0px;height:16px;line-height:16px;color:#1E1E1E;font-size:12px;letter-spacing:-0.205px;">EditDataHandler.ashx.cs</div><svg style="left:46px;top:238px;" width="8" height="12" viewBox="0 0 8 12"><path d="M1.5 1.700L6.200 6 1.500 10.300z" fill="none" stroke="#1E1E1E" stroke-width="1.150"/></svg><svg style="left:59px;top:240px;" width="8" height="9" viewBox="0 0 8 9"><rect x=".800" y="4.500" width="5.400" height="3.700" fill="#1BA1E2"/><path d="M1.500 3.600V3a2 2 0 0 1 4 0v.600" fill="none" stroke="#1BA1E2" stroke-width="1.100"/><rect x="2.800" y="5.200" width="1.400" height="1.700" fill="#fff"/></svg><svg style="left:68px;top:238px;" width="16" height="12" viewBox="0 0 16 12"><circle cx="10.100" cy="5.900" r="4.600" fill="none" stroke="#2A2A2A" stroke-width="1.100"/><path d="M5.500 4.400h9.200M5.500 7.400h9.200M8.600 1.500v8.800M11.600 1.500v8.800" stroke="#2A2A2A" stroke-width=".9" fill="none"/><path d="M.700 3.200h3.500M1.700 5.400h2.500M.700 7.600h3.500" stroke="#2A2A2A" stroke-width="1"/></svg><div class="t" style="left:89.29999999999995px;top:236.0px;height:16px;line-height:16px;color:#1E1E1E;font-size:12px;letter-spacing:-0.181px;">GetControl.ashx</div><svg style="left:46px;top:256px;" width="8" height="12" viewBox="0 0 8 12"><path d="M1.5 1.700L6.200 6 1.500 10.300z" fill="none" stroke="#1E1E1E" stroke-width="1.150"/></svg><svg style="left:59px;top:258px;" width="8" height="9" viewBox="0 0 8 9"><rect x=".800" y="4.500" width="5.400" height="3.700" fill="#1BA1E2"/><path d="M1.500 3.600V3a2 2 0 0 1 4 0v.600" fill="none" stroke="#1BA1E2" stroke-width="1.100"/><rect x="2.800" y="5.200" width="1.400" height="1.700" fill="#fff"/></svg><svg style="left:68px;top:256px;" width="16" height="12" viewBox="0 0 16 12"><circle cx="10.100" cy="5.900" r="4.600" fill="none" stroke="#2A2A2A" stroke-width="1.100"/><path d="M5.500 4.400h9.200M5.500 7.400h9.200M8.600 1.500v8.800M11.600 1.500v8.800" stroke="#2A2A2A" stroke-width=".9" fill="none"/><path d="M.700 3.200h3.500M1.700 5.400h2.500M.700 7.600h3.500" stroke="#2A2A2A" stroke-width="1"/></svg><div class="t" style="left:89.29999999999995px;top:254.0px;height:16px;line-height:16px;color:#1E1E1E;font-size:12px;letter-spacing:-0.203px;">RegistryHandler.ashx</div><svg style="left:46px;top:274px;" width="8" height="12" viewBox="0 0 8 12"><path d="M1.5 1.700L6.200 6 1.500 10.300z" fill="none" stroke="#1E1E1E" stroke-width="1.150"/></svg><svg style="left:59px;top:276px;" width="8" height="9" viewBox="0 0 8 9"><rect x=".800" y="4.500" width="5.400" height="3.700" fill="#1BA1E2"/><path d="M1.500 3.600V3a2 2 0 0 1 4 0v.600" fill="none" stroke="#1BA1E2" stroke-width="1.100"/><rect x="2.800" y="5.200" width="1.400" height="1.700" fill="#fff"/></svg><svg style="left:68px;top:274px;" width="16" height="12" viewBox="0 0 16 12"><circle cx="10.100" cy="5.900" r="4.600" fill="none" stroke="#2A2A2A" stroke-width="1.100"/><path d="M5.500 4.400h9.200M5.500 7.400h9.200M8.600 1.500v8.800M11.600 1.500v8.800" stroke="#2A2A2A" stroke-width=".9" fill="none"/><path d="M.700 3.200h3.500M1.700 5.400h2.500M.700 7.600h3.500" stroke="#2A2A2A" stroke-width="1"/></svg><div class="t" style="left:89.29999999999995px;top:272.0px;height:16px;line-height:16px;color:#1E1E1E;font-size:12px;letter-spacing:-0.251px;">requester.ashx</div><svg style="left:28px;top:292px;" width="8" height="12" viewBox="0 0 8 12"><path d="M1.5 1.700L6.200 6 1.500 10.300z" fill="none" stroke="#1E1E1E" stroke-width="1.150"/></svg><svg style="left:51px;top:292px;" width="14" height="12" viewBox="0 0 14 12"><path d="M.500 .800h5.500l1.500 1.500h6v9h-13z" fill="#ECEEFA" stroke="#2A2A2A" stroke-width="1" stroke-dasharray="1 1"/></svg><div class="t" style="left:71.29999999999995px;top:290.0px;height:16px;line-height:16px;color:#1E1E1E;font-size:12px;letter-spacing:-0.165px;">images</div><svg style="left:28px;top:310px;" width="8" height="12" viewBox="0 0 8 12"><path d="M1.5 1.700L6.200 6 1.500 10.300z" fill="none" stroke="#1E1E1E" stroke-width="1.150"/></svg><svg style="left:51px;top:310px;" width="14" height="12" viewBox="0 0 14 12"><path d="M0 0h8l1.500 2H13v9H0z" fill="#DCB67A"/><path d="M1.200 1.300h6" stroke="#F0DDBB" stroke-width="1"/></svg><div class="t" style="left:71.29999999999995px;top:308.0px;height:16px;line-height:16px;color:#1E1E1E;font-size:12px;letter-spacing:-1.500px;">Js</div><svg style="left:28px;top:328px;" width="8" height="12" viewBox="0 0 8 12"><path d="M1.5 1.700L6.200 6 1.500 10.300z" fill="none" stroke="#1E1E1E" stroke-width="1.150"/></svg><svg style="left:51px;top:328px;" width="14" height="12" viewBox="0 0 14 12"><path d="M0 0h8l1.500 2H13v9H0z" fill="#DCB67A"/><path d="M1.200 1.300h6" stroke="#F0DDBB" stroke-width="1"/></svg><div class="t" style="left:71.29999999999995px;top:326.0px;height:16px;line-height:16px;color:#1E1E1E;font-size:12px;letter-spacing:-0.144px;">Log</div><svg style="left:28px;top:348px;" width="8" height="8" viewBox="0 0 8 8"><path d="M7.1 .7v6.400H.6z" fill="#1E1E1E"/></svg><svg style="left:51px;top:346px;" width="15" height="12" viewBox="0 0 15 12"><path d="M.600 10.500V.600h7l1.500 2.200h4v3.500" fill="#FBFCFF" stroke="#DCB67A" stroke-width="1.200"/><path d="M2.600 6.300H14.200L12 11H.300z" fill="#DCB67A"/></svg><div class="t" style="left:71.29999999999995px;top:344.0px;height:16px;line-height:16px;color:#1E1E1E;font-size:12px;letter-spacing:0.046px;">ModalView</div><svg style="left:46px;top:364px;" width="8" height="12" viewBox="0 0 8 12"><path d="M1.5 1.700L6.200 6 1.500 10.300z" fill="none" stroke="#1E1E1E" stroke-width="1.150"/></svg><svg style="left:59px;top:366px;" width="8" height="9" viewBox="0 0 8 9"><rect x=".800" y="4.500" width="5.400" height="3.700" fill="#1BA1E2"/><path d="M1.500 3.600V3a2 2 0 0 1 4 0v.600" fill="none" stroke="#1BA1E2" stroke-width="1.100"/><rect x="2.800" y="5.200" width="1.400" height="1.700" fill="#fff"/></svg><svg style="left:68px;top:362px;" width="17" height="16" viewBox="0 0 17 16"><circle cx="11.600" cy="3.400" r="2.600" fill="#424242"/><path d="M10.500 11.700V8.200l1.500-1.100h3.200v4.600z" fill="#424242"/><circle cx="5.500" cy="10.500" r="4.700" fill="#1BA1E2"/><path d="M1 9h9M1 12h9M4 6.200v8.600M7 6.200v8.600" stroke="#F7F9FE" stroke-width=".8"/></svg><div class="t" style="left:89.29999999999995px;top:362.0px;height:16px;line-height:16px;color:#1E1E1E;font-size:12px;letter-spacing:-0.138px;">ModalBidToLot.ascx</div><svg style="left:46px;top:382px;" width="8" height="12" viewBox="0 0 8 12"><path d="M1.5 1.700L6.200 6 1.500 10.300z" fill="none" stroke="#1E1E1E" stroke-width="1.150"/></svg><svg style="left:59px;top:384px;" width="8" height="9" viewBox="0 0 8 9"><rect x=".800" y="4.500" width="5.400" height="3.700" fill="#1BA1E2"/><path d="M1.500 3.600V3a2 2 0 0 1 4 0v.600" fill="none" stroke="#1BA1E2" stroke-width="1.100"/><rect x="2.800" y="5.200" width="1.400" height="1.700" fill="#fff"/></svg><svg style="left:68px;top:380px;" width="17" height="16" viewBox="0 0 17 16"><circle cx="11.600" cy="3.400" r="2.600" fill="#424242"/><path d="M10.500 11.700V8.200l1.500-1.100h3.200v4.600z" fill="#424242"/><circle cx="5.500" cy="10.500" r="4.700" fill="#1BA1E2"/><path d="M1 9h9M1 12h9M4 6.200v8.600M7 6.200v8.600" stroke="#F7F9FE" stroke-width=".8"/></svg><div class="t" style="left:89.29999999999995px;top:380.0px;height:16px;line-height:16px;color:#1E1E1E;font-size:12px;letter-spacing:-0.220px;">ModalChangeUser.ascx</div><svg style="left:46px;top:400px;" width="8" height="12" viewBox="0 0 8 12"><path d="M1.5 1.700L6.200 6 1.500 10.300z" fill="none" stroke="#1E1E1E" stroke-width="1.150"/></svg><svg style="left:59px;top:402px;" width="8" height="9" viewBox="0 0 8 9"><rect x=".800" y="4.500" width="5.400" height="3.700" fill="#1BA1E2"/><path d="M1.500 3.600V3a2 2 0 0 1 4 0v.600" fill="none" stroke="#1BA1E2" stroke-width="1.100"/><rect x="2.800" y="5.200" width="1.400" height="1.700" fill="#fff"/></svg><svg style="left:68px;top:398px;" width="17" height="16" viewBox="0 0 17 16"><circle cx="11.600" cy="3.400" r="2.600" fill="#424242"/><path d="M10.500 11.700V8.200l1.500-1.100h3.200v4.600z" fill="#424242"/><circle cx="5.500" cy="10.500" r="4.700" fill="#1BA1E2"/><path d="M1 9h9M1 12h9M4 6.200v8.600M7 6.200v8.600" stroke="#F7F9FE" stroke-width=".8"/></svg><div class="t" style="left:89.29999999999995px;top:398.0px;height:16px;line-height:16px;color:#1E1E1E;font-size:12px;letter-spacing:0.012px;">ModalConfirmDialog.ascx</div><svg style="left:46px;top:418px;" width="8" height="12" viewBox="0 0 8 12"><path d="M1.5 1.700L6.200 6 1.500 10.300z" fill="none" stroke="#1E1E1E" stroke-width="1.150"/></svg><svg style="left:59px;top:420px;" width="8" height="9" viewBox="0 0 8 9"><rect x=".800" y="4.500" width="5.400" height="3.700" fill="#1BA1E2"/><path d="M1.500 3.600V3a2 2 0 0 1 4 0v.600" fill="none" stroke="#1BA1E2" stroke-width="1.100"/><rect x="2.800" y="5.200" width="1.400" height="1.700" fill="#fff"/></svg><svg style="left:68px;top:416px;" width="17" height="16" viewBox="0 0 17 16"><circle cx="11.600" cy="3.400" r="2.600" fill="#424242"/><path d="M10.500 11.700V8.200l1.500-1.100h3.200v4.600z" fill="#424242"/><circle cx="5.500" cy="10.500" r="4.700" fill="#1BA1E2"/><path d="M1 9h9M1 12h9M4 6.200v8.600M7 6.200v8.600" stroke="#F7F9FE" stroke-width=".8"/></svg><div class="t" style="left:89.29999999999995px;top:416.0px;height:16px;line-height:16px;color:#1E1E1E;font-size:12px;letter-spacing:-0.206px;">ModalFileList.ascx</div><svg style="left:46px;top:436px;" width="8" height="12" viewBox="0 0 8 12"><path d="M1.5 1.700L6.200 6 1.500 10.300z" fill="none" stroke="#1E1E1E" stroke-width="1.150"/></svg><svg style="left:59px;top:438px;" width="8" height="9" viewBox="0 0 8 9"><path d="M1.300 4.300L3.300 6.600 6.600 .900" fill="none" stroke="#E51400" stroke-width="1.700"/></svg><svg style="left:68px;top:434px;" width="17" height="16" viewBox="0 0 17 16"><circle cx="11.600" cy="3.400" r="2.600" fill="#424242"/><path d="M10.500 11.700V8.200l1.500-1.100h3.200v4.600z" fill="#424242"/><circle cx="5.500" cy="10.500" r="4.700" fill="#1BA1E2"/><path d="M1 9h9M1 12h9M4 6.200v8.600M7 6.200v8.600" stroke="#F7F9FE" stroke-width=".8"/></svg><div class="t" style="left:89.29999999999995px;top:434.0px;height:16px;line-height:16px;color:#1E1E1E;font-size:12px;letter-spacing:-0.153px;">ModalFileUpload.ascx</div><svg style="left:46px;top:454px;" width="8" height="12" viewBox="0 0 8 12"><path d="M1.5 1.700L6.200 6 1.500 10.300z" fill="none" stroke="#1E1E1E" stroke-width="1.150"/></svg><svg style="left:59px;top:456px;" width="8" height="9" viewBox="0 0 8 9"><rect x=".800" y="4.500" width="5.400" height="3.700" fill="#1BA1E2"/><path d="M1.500 3.600V3a2 2 0 0 1 4 0v.600" fill="none" stroke="#1BA1E2" stroke-width="1.100"/><rect x="2.800" y="5.200" width="1.400" height="1.700" fill="#fff"/></svg><svg style="left:68px;top:452px;" width="17" height="16" viewBox="0 0 17 16"><circle cx="11.600" cy="3.400" r="2.600" fill="#424242"/><path d="M10.500 11.700V8.200l1.500-1.100h3.200v4.600z" fill="#424242"/><circle cx="5.500" cy="10.500" r="4.700" fill="#1BA1E2"/><path d="M1 9h9M1 12h9M4 6.200v8.600M7 6.200v8.600" stroke="#F7F9FE" stroke-width=".8"/></svg><div class="t" style="left:89.29999999999995px;top:452.0px;height:16px;line-height:16px;color:#1E1E1E;font-size:12px;letter-spacing:-0.057px;">ModalLogin.ascx</div><svg style="left:46px;top:472px;" width="8" height="12" viewBox="0 0 8 12"><path d="M1.5 1.700L6.200 6 1.500 10.300z" fill="none" stroke="#1E1E1E" stroke-width="1.150"/></svg><svg style="left:59px;top:474px;" width="8" height="9" viewBox="0 0 8 9"><rect x=".800" y="4.500" width="5.400" height="3.700" fill="#1BA1E2"/><path d="M1.500 3.600V3a2 2 0 0 1 4 0v.600" fill="none" stroke="#1BA1E2" stroke-width="1.100"/><rect x="2.800" y="5.200" width="1.400" height="1.700" fill="#fff"/></svg><svg style="left:68px;top:470px;" width="17" height="16" viewBox="0 0 17 16"><circle cx="11.600" cy="3.400" r="2.600" fill="#424242"/><path d="M10.500 11.700V8.200l1.500-1.100h3.200v4.600z" fill="#424242"/><circle cx="5.500" cy="10.500" r="4.700" fill="#1BA1E2"/><path d="M1 9h9M1 12h9M4 6.200v8.600M7 6.200v8.600" stroke="#F7F9FE" stroke-width=".8"/></svg><div class="t" style="left:89.29999999999995px;top:470.0px;height:16px;line-height:16px;color:#1E1E1E;font-size:12px;letter-spacing:-0.059px;">ModalLotDescription.ascx</div><svg style="left:46px;top:490px;" width="8" height="12" viewBox="0 0 8 12"><path d="M1.5 1.700L6.200 6 1.500 10.300z" fill="none" stroke="#1E1E1E" stroke-width="1.150"/></svg><svg style="left:59px;top:492px;" width="8" height="9" viewBox="0 0 8 9"><rect x=".800" y="4.500" width="5.400" height="3.700" fill="#1BA1E2"/><path d="M1.500 3.600V3a2 2 0 0 1 4 0v.600" fill="none" stroke="#1BA1E2" stroke-width="1.100"/><rect x="2.800" y="5.200" width="1.400" height="1.700" fill="#fff"/></svg><svg style="left:68px;top:488px;" width="17" height="16" viewBox="0 0 17 16"><circle cx="11.600" cy="3.400" r="2.600" fill="#424242"/><path d="M10.500 11.700V8.200l1.500-1.100h3.200v4.600z" fill="#424242"/><circle cx="5.500" cy="10.500" r="4.700" fill="#1BA1E2"/><path d="M1 9h9M1 12h9M4 6.200v8.600M7 6.200v8.600" stroke="#F7F9FE" stroke-width=".8"/></svg><div class="t" style="left:89.29999999999995px;top:488.0px;height:16px;line-height:16px;color:#1E1E1E;font-size:12px;letter-spacing:0.087px;">ModalLotNotify.ascx</div><svg style="left:46px;top:508px;" width="8" height="12" viewBox="0 0 8 12"><path d="M1.5 1.700L6.200 6 1.500 10.300z" fill="none" stroke="#1E1E1E" stroke-width="1.150"/></svg><svg style="left:59px;top:510px;" width="8" height="9" viewBox="0 0 8 9"><rect x=".800" y="4.500" width="5.400" height="3.700" fill="#1BA1E2"/><path d="M1.500 3.600V3a2 2 0 0 1 4 0v.600" fill="none" stroke="#1BA1E2" stroke-width="1.100"/><rect x="2.800" y="5.200" width="1.400" height="1.700" fill="#fff"/></svg><svg style="left:68px;top:506px;" width="17" height="16" viewBox="0 0 17 16"><circle cx="11.600" cy="3.400" r="2.600" fill="#424242"/><path d="M10.500 11.700V8.200l1.500-1.100h3.200v4.600z" fill="#424242"/><circle cx="5.500" cy="10.500" r="4.700" fill="#1BA1E2"/><path d="M1 9h9M1 12h9M4 6.200v8.600M7 6.200v8.600" stroke="#F7F9FE" stroke-width=".8"/></svg><div class="t" style="left:89.29999999999995px;top:506.0px;height:16px;line-height:16px;color:#1E1E1E;font-size:12px;letter-spacing:-0.209px;">ModalLotRequest.ascx</div><svg style="left:46px;top:526px;" width="8" height="12" viewBox="0 0 8 12"><path d="M1.5 1.700L6.200 6 1.500 10.300z" fill="none" stroke="#1E1E1E" stroke-width="1.150"/></svg><svg style="left:59px;top:528px;" width="8" height="9" viewBox="0 0 8 9"><rect x=".800" y="4.500" width="5.400" height="3.700" fill="#1BA1E2"/><path d="M1.500 3.600V3a2 2 0 0 1 4 0v.600" fill="none" stroke="#1BA1E2" stroke-width="1.100"/><rect x="2.800" y="5.200" width="1.400" height="1.700" fill="#fff"/></svg><svg style="left:68px;top:524px;" width="17" height="16" viewBox="0 0 17 16"><circle cx="11.600" cy="3.400" r="2.600" fill="#424242"/><path d="M10.500 11.700V8.200l1.500-1.100h3.200v4.600z" fill="#424242"/><circle cx="5.500" cy="10.500" r="4.700" fill="#1BA1E2"/><path d="M1 9h9M1 12h9M4 6.200v8.600M7 6.200v8.600" stroke="#F7F9FE" stroke-width=".8"/></svg><div class="t" style="left:89.29999999999995px;top:524.0px;height:16px;line-height:16px;color:#1E1E1E;font-size:12px;letter-spacing:-0.074px;">ModalLotUpload.ascx</div><svg style="left:46px;top:546px;" width="8" height="8" viewBox="0 0 8 8"><path d="M7.1 .7v6.400H.6z" fill="#1E1E1E"/></svg><svg style="left:59px;top:546px;" width="8" height="9" viewBox="0 0 8 9"><path d="M1.300 4.300L3.300 6.600 6.600 .900" fill="none" stroke="#E51400" stroke-width="1.700"/></svg><svg style="left:68px;top:542px;" width="17" height="16" viewBox="0 0 17 16"><circle cx="11.600" cy="3.400" r="2.600" fill="#424242"/><path d="M10.500 11.700V8.200l1.500-1.100h3.200v4.600z" fill="#424242"/><circle cx="5.500" cy="10.500" r="4.700" fill="#1BA1E2"/><path d="M1 9h9M1 12h9M4 6.200v8.600M7 6.200v8.600" stroke="#F7F9FE" stroke-width=".8"/></svg><div class="t" style="left:89.29999999999995px;top:542.0px;height:16px;line-height:16px;color:#1E1E1E;font-size:12px;letter-spacing:0.131px;">ModalNotifyMin.ascx</div><svg style="left:64px;top:562px;" width="8" height="12" viewBox="0 0 8 12"><path d="M1.5 1.700L6.200 6 1.500 10.300z" fill="none" stroke="#1E1E1E" stroke-width="1.150"/></svg><svg style="left:77px;top:564px;" width="8" height="9" viewBox="0 0 8 9"><rect x=".800" y="4.500" width="5.400" height="3.700" fill="#1BA1E2"/><path d="M1.500 3.600V3a2 2 0 0 1 4 0v.600" fill="none" stroke="#1BA1E2" stroke-width="1.100"/><rect x="2.800" y="5.200" width="1.400" height="1.700" fill="#fff"/></svg><svg style="left:87px;top:560px;" width="14" height="15" viewBox="0 0 14 15"><path d="M2.400 7.500v6h9V5l-3-3H6.500" fill="#ECECF4" stroke="#3B3B3B" stroke-width="1.100"/><path d="M8 1.500L12 5.500H8z" fill="#3B3B3B"/><path d="M0 4h5.800" stroke="#00539C" stroke-width="1.700"/><path d="M3 1l3.200 3L3 7" fill="none" stroke="#00539C" stroke-width="1.700"/></svg><div class="t" style="left:107.29999999999995px;top:560.0px;height:16px;line-height:16px;color:#1E1E1E;font-size:12px;letter-spacing:0.080px;">ModalNotifyMin.ascx.cs</div><svg style="left:64px;top:580px;" width="8" height="12" viewBox="0 0 8 12"><path d="M1.5 1.700L6.200 6 1.500 10.300z" fill="none" stroke="#1E1E1E" stroke-width="1.150"/></svg><svg style="left:77px;top:582px;" width="8" height="9" viewBox="0 0 8 9"><rect x=".800" y="4.500" width="5.400" height="3.700" fill="#1BA1E2"/><path d="M1.500 3.600V3a2 2 0 0 1 4 0v.600" fill="none" stroke="#1BA1E2" stroke-width="1.100"/><rect x="2.800" y="5.200" width="1.400" height="1.700" fill="#fff"/></svg><svg style="left:87px;top:578px;" width="14" height="15" viewBox="0 0 14 15"><path d="M2.400 7.500v6h9V5l-3-3H6.500" fill="#ECECF4" stroke="#3B3B3B" stroke-width="1.100"/><path d="M8 1.500L12 5.500H8z" fill="#3B3B3B"/><path d="M0 4h5.800" stroke="#00539C" stroke-width="1.700"/><path d="M3 1l3.200 3L3 7" fill="none" stroke="#00539C" stroke-width="1.700"/></svg><div class="t" style="left:107.29999999999995px;top:578.0px;height:16px;line-height:16px;color:#1E1E1E;font-size:12px;letter-spacing:0.027px;">ModalNotifyMin.ascx.designer.cs</div><svg style="left:46px;top:598px;" width="8" height="12" viewBox="0 0 8 12"><path d="M1.5 1.700L6.200 6 1.500 10.300z" fill="none" stroke="#1E1E1E" stroke-width="1.150"/></svg><svg style="left:59px;top:600px;" width="8" height="9" viewBox="0 0 8 9"><rect x=".800" y="4.500" width="5.400" height="3.700" fill="#1BA1E2"/><path d="M1.500 3.600V3a2 2 0 0 1 4 0v.600" fill="none" stroke="#1BA1E2" stroke-width="1.100"/><rect x="2.800" y="5.200" width="1.400" height="1.700" fill="#fff"/></svg><svg style="left:68px;top:596px;" width="17" height="16" viewBox="0 0 17 16"><circle cx="11.600" cy="3.400" r="2.600" fill="#424242"/><path d="M10.500 11.700V8.200l1.500-1.100h3.200v4.600z" fill="#424242"/><circle cx="5.500" cy="10.500" r="4.700" fill="#1BA1E2"/><path d="M1 9h9M1 12h9M4 6.200v8.600M7 6.200v8.600" stroke="#F7F9FE" stroke-width=".8"/></svg><div class="t" style="left:89.29999999999995px;top:596.0px;height:16px;line-height:16px;color:#1E1E1E;font-size:12px;letter-spacing:-0.214px;">ModalSubscribe.ascx</div><svg style="left:46px;top:616px;" width="8" height="12" viewBox="0 0 8 12"><path d="M1.5 1.700L6.200 6 1.500 10.300z" fill="none" stroke="#1E1E1E" stroke-width="1.150"/></svg><svg style="left:59px;top:618px;" width="8" height="9" viewBox="0 0 8 9"><rect x=".800" y="4.500" width="5.400" height="3.700" fill="#1BA1E2"/><path d="M1.500 3.600V3a2 2 0 0 1 4 0v.600" fill="none" stroke="#1BA1E2" stroke-width="1.100"/><rect x="2.800" y="5.200" width="1.400" height="1.700" fill="#fff"/></svg><svg style="left:68px;top:614px;" width="17" height="16" viewBox="0 0 17 16"><circle cx="11.600" cy="3.400" r="2.600" fill="#424242"/><path d="M10.500 11.700V8.200l1.500-1.100h3.200v4.600z" fill="#424242"/><circle cx="5.500" cy="10.500" r="4.700" fill="#1BA1E2"/><path d="M1 9h9M1 12h9M4 6.200v8.600M7 6.200v8.600" stroke="#F7F9FE" stroke-width=".8"/></svg><div class="t" style="left:89.29999999999995px;top:614.0px;height:16px;line-height:16px;color:#1E1E1E;font-size:12px;letter-spacing:-0.351px;">ModalUnReadMessages.ascx</div><svg style="left:28px;top:634px;" width="8" height="12" viewBox="0 0 8 12"><path d="M1.5 1.700L6.200 6 1.500 10.300z" fill="none" stroke="#1E1E1E" stroke-width="1.150"/></svg><svg style="left:51px;top:634px;" width="14" height="12" viewBox="0 0 14 12"><path d="M0 0h8l1.500 2H13v9H0z" fill="#DCB67A"/><path d="M1.200 1.300h6" stroke="#F0DDBB" stroke-width="1"/></svg><div class="t" style="left:71.29999999999995px;top:632.0px;height:16px;line-height:16px;color:#1E1E1E;font-size:12px;letter-spacing:0.163px;">Model</div><svg style="left:28px;top:652px;" width="8" height="12" viewBox="0 0 8 12"><path d="M1.5 1.700L6.200 6 1.500 10.300z" fill="none" stroke="#1E1E1E" stroke-width="1.150"/></svg><svg style="left:51px;top:652px;" width="14" height="12" viewBox="0 0 14 12"><path d="M.500 .800h5.500l1.500 1.500h6v9h-13z" fill="#ECEEFA" stroke="#2A2A2A" stroke-width="1" stroke-dasharray="1 1"/></svg><div class="t" style="left:71.29999999999995px;top:650.0px;height:16px;line-height:16px;color:#1E1E1E;font-size:12px;letter-spacing:-0.103px;">node_modules</div><svg style="left:28px;top:670px;" width="8" height="12" viewBox="0 0 8 12"><path d="M1.5 1.700L6.200 6 1.500 10.300z" fill="none" stroke="#1E1E1E" stroke-width="1.150"/></svg><svg style="left:51px;top:670px;" width="14" height="12" viewBox="0 0 14 12"><path d="M.500 .800h5.500l1.500 1.500h6v9h-13z" fill="#ECEEFA" stroke="#2A2A2A" stroke-width="1" stroke-dasharray="1 1"/></svg><div class="t" style="left:71.29999999999995px;top:668.0px;height:16px;line-height:16px;color:#1E1E1E;font-size:12px;letter-spacing:0.061px;">obj</div><svg style="left:28px;top:688px;" width="8" height="12" viewBox="0 0 8 12"><path d="M1.5 1.700L6.200 6 1.500 10.300z" fill="none" stroke="#1E1E1E" stroke-width="1.150"/></svg><svg style="left:51px;top:688px;" width="14" height="12" viewBox="0 0 14 12"><path d="M.500 .800h5.500l1.500 1.500h6v9h-13z" fill="#ECEEFA" stroke="#2A2A2A" stroke-width="1" stroke-dasharray="1 1"/></svg><div class="t" style="left:71.29999999999995px;top:686.0px;height:16px;line-height:16px;color:#1E1E1E;font-size:12px;letter-spacing:-0.322px;">packages</div><svg style="left:28px;top:706px;" width="8" height="12" viewBox="0 0 8 12"><path d="M1.5 1.700L6.200 6 1.500 10.300z" fill="none" stroke="#1E1E1E" stroke-width="1.150"/></svg><svg style="left:51px;top:706px;" width="14" height="12" viewBox="0 0 14 12"><path d="M0 0h8l1.500 2H13v9H0z" fill="#DCB67A"/><path d="M1.200 1.300h6" stroke="#F0DDBB" stroke-width="1"/></svg><div class="t" style="left:71.29999999999995px;top:704.0px;height:16px;line-height:16px;color:#1E1E1E;font-size:12px;letter-spacing:-0.029px;">pictures</div><svg style="left:51px;top:724px;" width="14" height="12" viewBox="0 0 14 12"><path d="M0 0h8l1.500 2H13v9H0z" fill="#DCB67A"/><path d="M1.200 1.300h6" stroke="#F0DDBB" stroke-width="1"/></svg><div class="t" style="left:71.29999999999995px;top:722.0px;height:16px;line-height:16px;color:#1E1E1E;font-size:12px;letter-spacing:-0.251px;">Private</div></div>
<div style="left:1896px;top:170px;width:17px;height:730px;background:#E8E8EC;"></div>
<svg style="left:1900px;top:176px;" width="9" height="5" viewBox="0 0 9 5"><path d="M0 5L4.500 0 9 5z" fill="#868999"/></svg>
<svg style="left:1900px;top:888.8px;" width="9" height="5" viewBox="0 0 9 5"><path d="M0 0L4.500 5 9 0z" fill="#868999"/></svg>
<div style="left:1900px;top:255px;width:9px;height:94px;background:#C2C3C9;"></div>
<div style="left:1559px;top:900px;width:354px;height:17px;background:#E8E8EC;"></div>
<svg style="left:1565px;top:904px;" width="5" height="9" viewBox="0 0 5 9"><path d="M5 0L0 4.500 5 9z" fill="#868999"/></svg>
<svg style="left:1885px;top:904px;" width="5" height="9" viewBox="0 0 5 9"><path d="M0 0l5 4.500L0 9z" fill="#868999"/></svg>
<div style="left:1576px;top:904px;width:290px;height:9px;background:#C2C3C9;"></div>
<div style="left:1559px;top:917px;width:100px;height:20px;background:#F7F9FE;"></div>
<div class="t" style="left:1564px;top:919.0px;height:16px;line-height:16px;color:#1E1E1E;font-size:12px;letter-spacing:-0.064px;">Solution Explorer</div>
<div style="left:1661px;top:918px;width:74px;height:18px;background:#40568D;"></div>
<div class="t" style="left:1666.3px;top:919.0px;height:16px;line-height:16px;color:#fff;font-size:12px;letter-spacing:-0.246px;">Git Changes</div>
<div style="left:1737px;top:918px;width:84px;height:18px;background:#40568D;"></div>
<div class="t" style="left:1742.5px;top:919.0px;height:16px;line-height:16px;color:#fff;font-size:12px;letter-spacing:-0.260px;">Team Explorer</div>
<div style="left:1559px;top:945px;width:354px;height:21px;background:#40568D;"></div>
<div class="t" style="left:1563.3px;top:948.5px;height:16px;line-height:16px;color:#fff;font-size:12px;letter-spacing:-0.210px;">Properties</div>
<svg style="left:1865px;top:954px;" width="7" height="4" viewBox="0 0 7 4"><path d="M.300 0h6.400L3.500 3.500z" fill="#B9C3E3"/></svg>
<svg style="left:1881px;top:950px;" width="9" height="11" viewBox="0 0 9 11"><path d="M4.500 11V7M1 6.500h7M2.500 6.500v-6h4v6" fill="none" stroke="#D0D8F0" stroke-width="1"/><path d="M5.800 .500v6" stroke="#D0D8F0" stroke-width="1.600"/></svg>
<svg style="left:1897px;top:951px;" width="10" height="10" viewBox="0 0 10 10"><path d="M.5 .5l9 9M9.5 .5l-9 9" stroke="#C8D0EA" stroke-width="1.2"/></svg>
<div style="left:1559px;top:966px;width:354px;height:25px;background:#FFFFFF;"></div>
<svg style="left:1903px;top:977px;" width="6" height="3" viewBox="0 0 6 3"><path d="M0 0h6L3 3z" fill="#000"/></svg>
<div style="left:1559px;top:991px;width:354px;height:13px;background:#CCD5F0;border-left:1px solid #fff;border-right:1px solid #fff;"></div>
<div style="left:1559px;top:1004px;width:354px;height:6px;background:#FBFBFE;"></div>
<div style="left:1562px;top:992px;width:23px;height:12px;background:#FFECBF;border:1.500px solid #A8832A;border-bottom:0;"></div>
<svg style="left:1566px;top:995px;" width="14" height="8" viewBox="0 0 14 8"><rect x="0" y="0" width="4" height="4" fill="#1E1E1E"/><path d="M6 1h7M6 3.500h7M0 7h4M6 6.500h7" stroke="#1E1E1E" stroke-width="1.200"/></svg>
<svg style="left:1589px;top:995px;" width="14" height="9" viewBox="0 0 14 9"><rect x="0" y="0" width="7" height="7" fill="#1E1E1E"/><path d="M2 5.500l1.500-4 1.500 4M2.500 4h2" stroke="#fff" stroke-width=".8" fill="none"/><path d="M10.500 4v5" stroke="#00539C" stroke-width="1.500"/></svg>
<div style="left:1611px;top:994px;width:1px;height:10px;background:#8E9BBC;"></div>
<svg style="left:1621px;top:995px;" width="12" height="9" viewBox="0 0 12 9"><circle cx="6" cy="6" r="5" fill="#A0A4B8"/><path d="M6 6L9.500 2.500" stroke="#E8EBF6" stroke-width="2"/></svg>
<div class="t" style="left:1600px;top:945.5px;height:24px;line-height:24px;color:rgba(150,150,150,.62);font-size:19px;letter-spacing:0.347px;">Activate Windows</div>
<div class="t" style="left:1599.5px;top:972.0px;height:18px;line-height:18px;color:rgba(150,150,150,.62);font-size:14.500px;letter-spacing:0.189px;">Go to Settings to activate Windows.</div>
<div style="left:0px;top:1017px;width:1920px;height:23px;background:#A24B40;"></div>
<div style="left:0px;top:1040px;width:1920px;height:3px;background:#232B2B;"></div>
<div style="left:247px;top:1040px;width:45px;height:3px;background:#4A4F4F;"></div>
<div style="left:786px;top:1040px;width:47px;height:3px;background:#4A4F4F;"></div>
<svg style="left:4px;top:1023.5px;" width="16" height="12" viewBox="0 0 16 12"><path d="M3.500 .800h11.500l-2.500 10.400H1z" fill="none" stroke="#fff" stroke-width="1.300"/></svg>
<div class="t" style="left:28px;top:1020.5px;height:16px;line-height:16px;color:#fff;font-size:12px;letter-spacing:-0.438px;">Ready</div>
<svg style="left:1579px;top:1023px;" width="10" height="13" viewBox="0 0 10 13"><path d="M5 12V3" stroke="#E6EDED" stroke-width="2.200"/><path d="M1.300 6.600L5 2.300l3.700 4.300" fill="none" stroke="#E6EDED" stroke-width="2.400"/></svg>
<div class="t" style="left:1598px;top:1020.5px;height:16px;line-height:16px;color:#fff;font-size:12px;">9</div>
<svg style="left:1611px;top:1026px;" width="8" height="4" viewBox="0 0 8 4"><path d="M0 4L4.0 0 8 4z" fill="#fff"/></svg>
<svg style="left:1642px;top:1022px;" width="12" height="12" viewBox="0 0 12 12"><path d="M0 12l.8-3.500L8.500 .800l2.700 2.700L3.500 11.200z" fill="#E8D6D3"/><path d="M0 12l.8-3.500 2.700 2.700z" fill="#fff"/></svg>
<div class="t" style="left:1661.8px;top:1020.5px;height:16px;line-height:16px;color:#fff;font-size:12px;letter-spacing:-0.210px;">99*</div>
<svg style="left:1701px;top:1020px;" width="16" height="16" viewBox="0 0 16 16"><path d="M8 .500L15.500 8 8 15.500.500 8z" fill="#E8D6D3"/><path d="M6 3l3.500 3.500M8 6v6" stroke="#A24B40" stroke-width="1.300"/><circle cx="8" cy="11.500" r="1.500" fill="#A24B40"/><circle cx="10.500" cy="8" r="1.300" fill="#A24B40"/><circle cx="8" cy="5.500" r="1.300" fill="#A24B40"/></svg>
<div class="t" style="left:1723px;top:1020.5px;height:16px;line-height:16px;color:#fff;font-size:12px;letter-spacing:-1.015px;">WEB</div>
<svg style="left:1753px;top:1026px;" width="8" height="4" viewBox="0 0 8 4"><path d="M0 4L4.0 0 8 4z" fill="#fff"/></svg>
<svg style="left:1784px;top:1021px;" width="15" height="14" viewBox="0 0 15 14"><path d="M1 2l6.500 6.500V14M14 2L7.500 8.500" fill="none" stroke="#E8D6D3" stroke-width="1.600"/><path d="M10.500 1H14.500V5" fill="none" stroke="#E8D6D3" stroke-width="1.300"/><path d="M.500 1.500h3" stroke="#E8D6D3" stroke-width="1.300"/></svg>
<div class="t" style="left:1805.7px;top:1020.5px;height:16px;line-height:16px;color:#fff;font-size:12px;letter-spacing:-0.231px;">master</div>
<svg style="left:1847px;top:1026px;" width="8" height="4" viewBox="0 0 8 4"><path d="M0 4L4.0 0 8 4z" fill="#fff"/></svg>
<svg style="left:1881px;top:1019px;" width="22" height="20" viewBox="0 0 22 20"><path d="M8 1.500c3 0 4.500 2.200 4.500 5v3l1.500 2.200H2l1.500-2.200v-3c0-2.800 1.500-5 4.500-5z" fill="#D6B0AB"/><circle cx="8" cy="13.500" r="1.500" fill="#D6B0AB"/><circle cx="14.500" cy="12.500" r="5.200" fill="#fff"/></svg>
<div class="t" style="left:1892px;top:1024.0px;height:16px;line-height:16px;color:#1E1E1E;font-size:10px;">2</div>
</body></html>
